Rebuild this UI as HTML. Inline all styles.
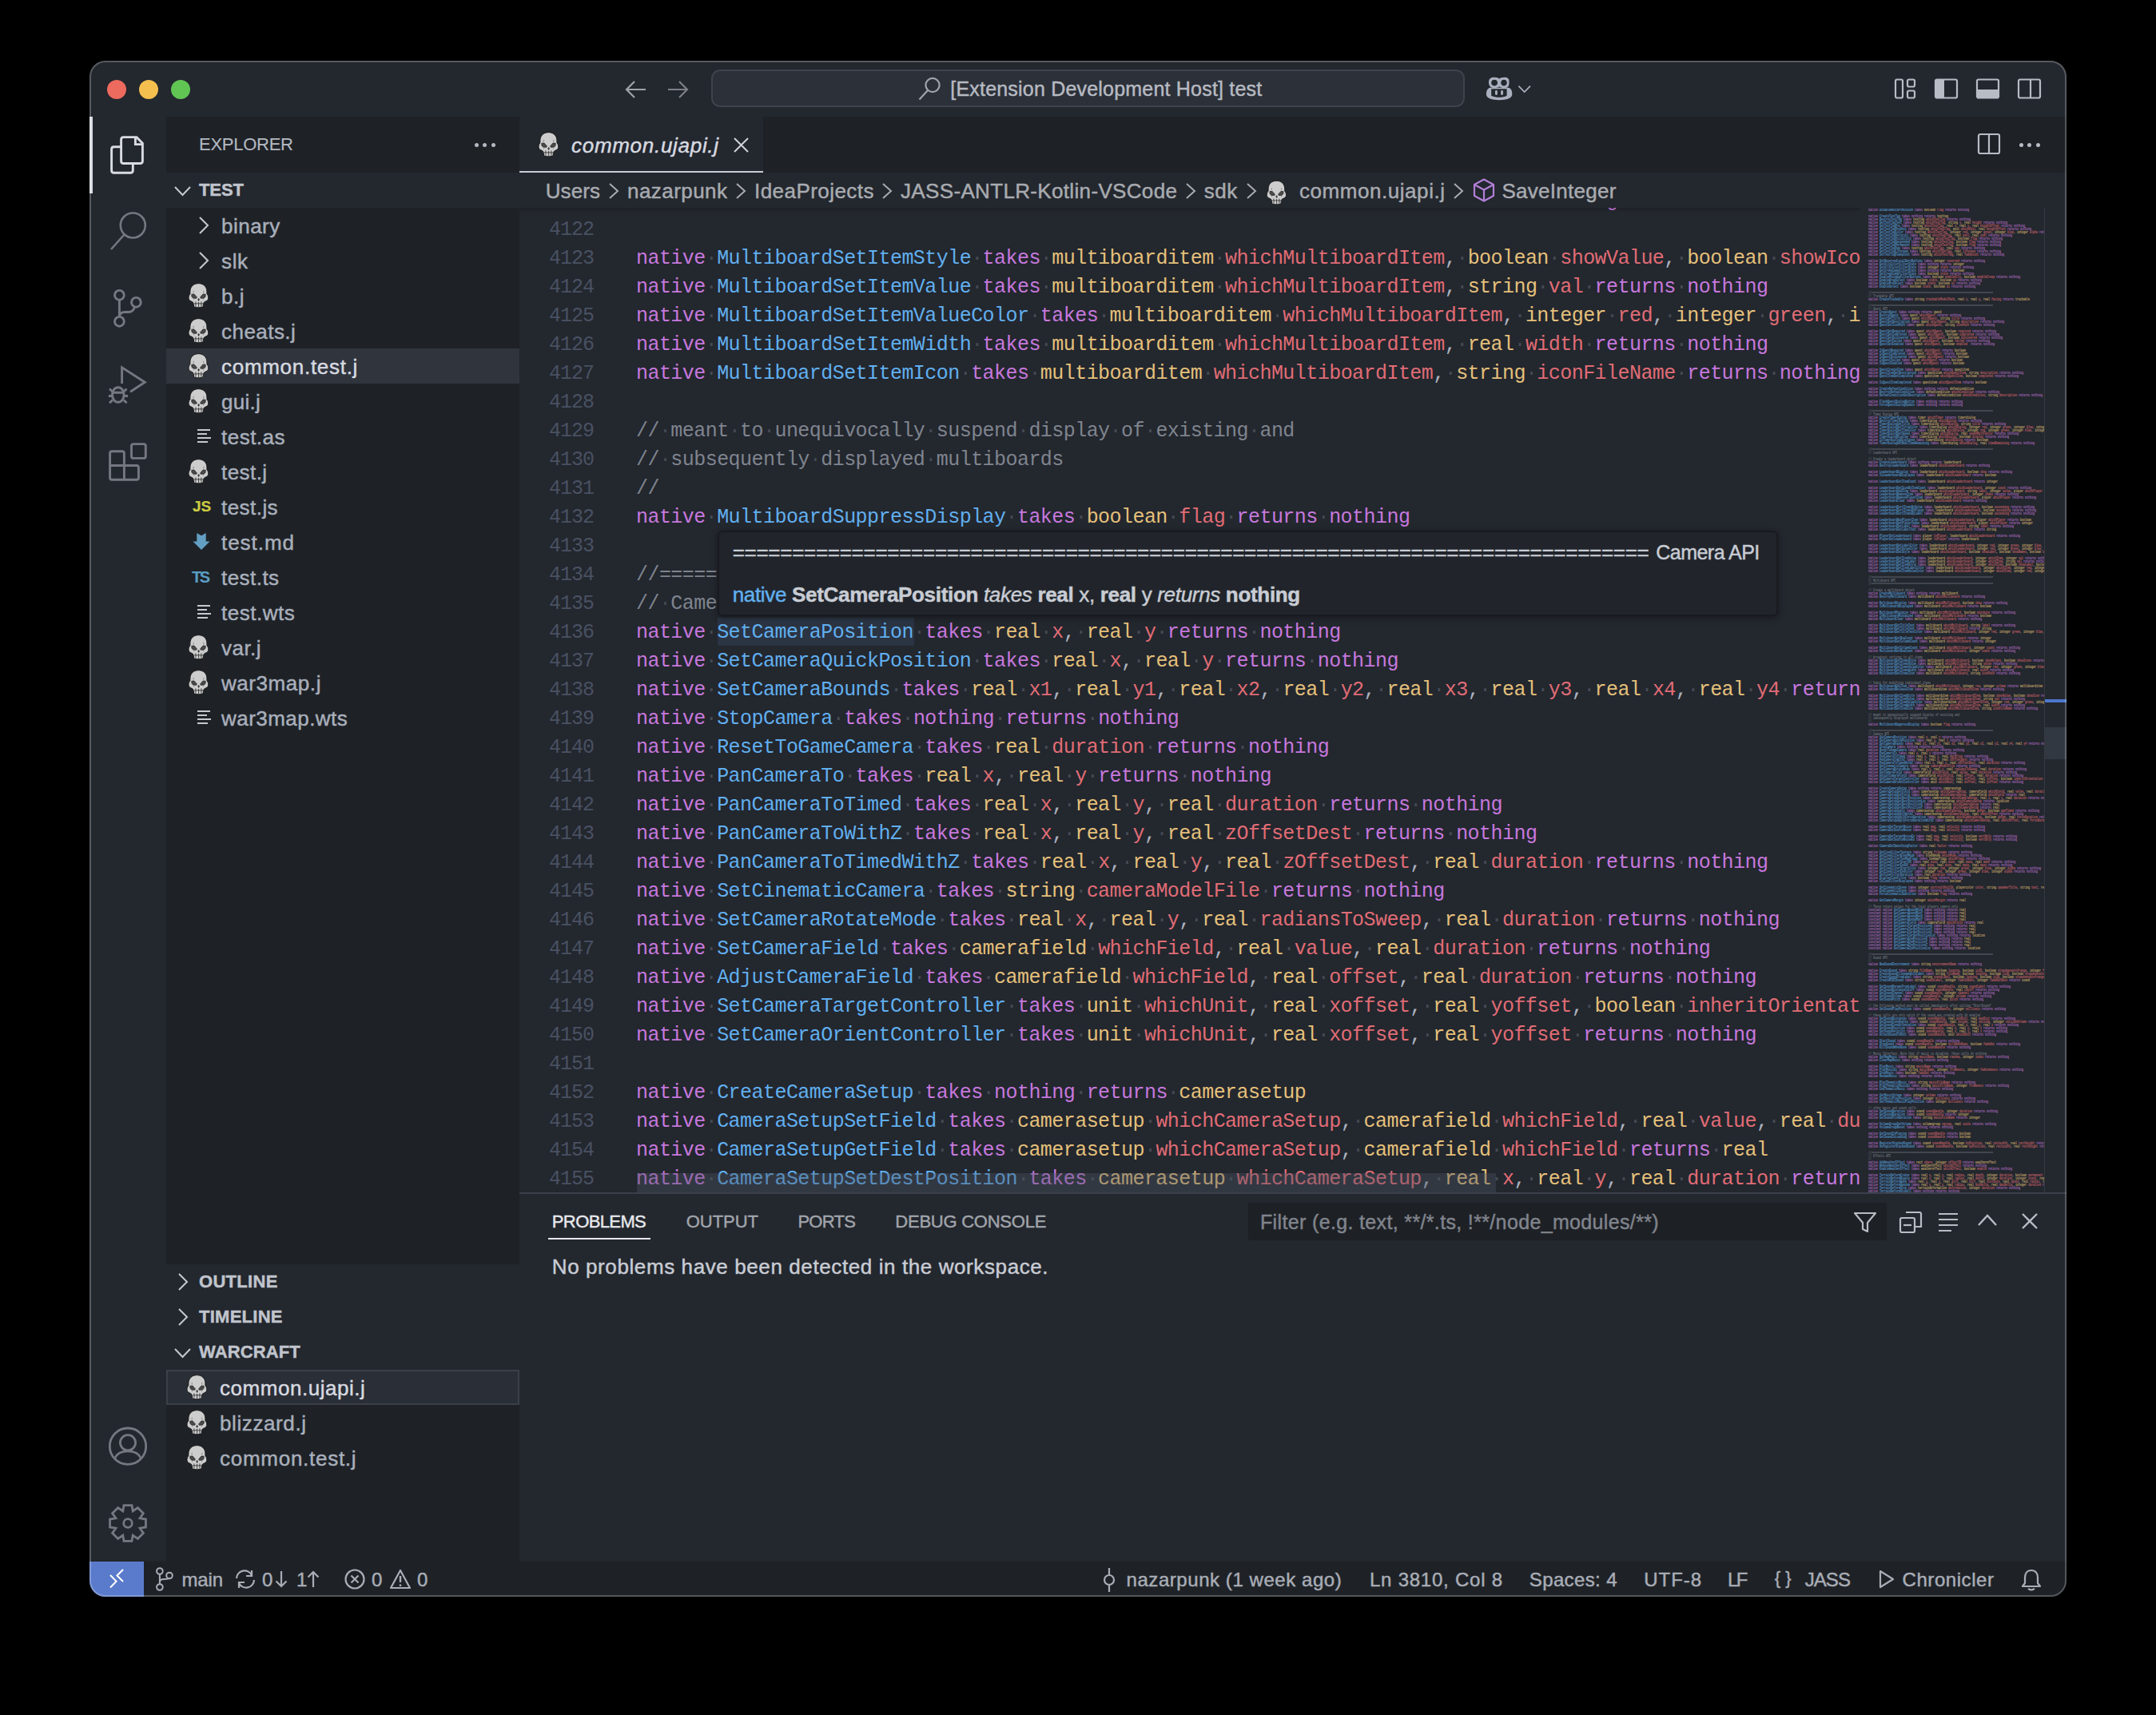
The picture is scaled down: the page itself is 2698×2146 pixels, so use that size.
<!DOCTYPE html><html><head><meta charset="utf-8"><style>
html,body{margin:0;padding:0;background:#000;width:2698px;height:2146px;overflow:hidden}
.t{position:absolute;white-space:pre;font-family:"Liberation Sans",sans-serif;-webkit-text-stroke:0.45px currentColor}
.r{position:absolute}
.s{position:absolute;overflow:visible}
.code{position:absolute;white-space:pre;font-family:"Liberation Mono",monospace;font-size:25px;line-height:36px;height:36px}
#win{position:absolute;left:0;top:0;width:2698px;height:2146px;clip-path:inset(76px 112px 148px 112px round 20px);background:#23272e}
#wb{position:absolute;left:112px;top:76px;width:2474px;height:1922px;border-radius:20px;box-sizing:border-box;border:2px solid rgba(255,255,255,0.24)}

</style></head><body>
<svg width="0" height="0" style="position:absolute"><defs><symbol id="skull" viewBox="0 0 40 44">
<path d="M20,6.6 C26.8,6.6 30.8,11.2 30.8,17 L30.9,20.2 C32.6,21.6 33.4,25.6 32.2,27.6 C31,29.6 28.6,29.6 27.2,30.8 L26.2,33.2 L26,36.2 C24.4,38.2 15.6,38.2 14,36.2 L13.8,33.2 L12.8,30.8 C11.4,29.6 9,29.6 7.8,27.6 C6.6,25.6 7.4,21.6 9.1,20.2 L9.2,17 C9.2,11.2 13.2,6.6 20,6.6 Z" fill="#cdcdcd" stroke="#1a1a1a" stroke-width="1"/>
<path d="M11.2,20.6 L14.4,20.4 L17.9,24.4 L17.2,25.8 L13,25.6 L11.2,23.4 Z" fill="#4a4a4a" stroke="#222" stroke-width="0.8"/>
<path d="M29,20.6 L25.8,20.4 L22.3,24.4 L23,25.8 L27.2,25.6 L29,23.4 Z" fill="#4a4a4a" stroke="#222" stroke-width="0.8"/>
<path d="M20.2,25.6 L21.6,27.4 L20.2,29.6 L18.8,27.4 Z" fill="#333"/>
<path d="M13.6,16 V19 M26.6,16 V19 M14,26.4 V28 M26.4,26.4 V28" stroke="#8a8a8a" stroke-width="1"/>
<path d="M16.4,30 V36.5 M20.2,30.5 V37 M23.6,30 V36.5 M14.5,32.6 H25.8" stroke="#333" stroke-width="0.9"/>
</symbol></defs></svg>
<div id="win">
<div class="r" style="left:134px;top:100px;width:24px;height:24px;border-radius:50%;background:#ed6a5e"></div>
<div class="r" style="left:174px;top:100px;width:24px;height:24px;border-radius:50%;background:#f4bf4f"></div>
<div class="r" style="left:214px;top:100px;width:24px;height:24px;border-radius:50%;background:#61c554"></div>
<svg class="s" style="left:782px;top:100px;" width="28" height="24" viewBox="0 0 28 24"><path d="M2,12 H26 M12,2 L2,12 L12,22" fill="none" stroke="#a0a3aa" stroke-width="2.2"/></svg>
<svg class="s" style="left:834px;top:100px;" width="28" height="24" viewBox="0 0 28 24"><path d="M26,12 H2 M16,2 L26,12 L16,22" fill="none" stroke="#7d8086" stroke-width="2.2"/></svg>
<div class="r" style="left:890px;top:87px;width:943px;height:47px;box-sizing:border-box;border-radius:11px;background:#2c3038;border:2px solid #3f434b"></div>
<svg class="s" style="left:1148px;top:95px;" width="30" height="32" viewBox="0 0 30 32"><circle cx="19" cy="11.5" r="8.6" fill="none" stroke="#a0a4ab" stroke-width="2.2"/><path d="M13,18 L2.5,29.5" stroke="#a0a4ab" stroke-width="2.2"/></svg>
<div class="t" style="left:1189.3px;top:98.8px;font-size:25px;line-height:25px;color:#b6bac2;letter-spacing:0.20px;">[Extension Development Host] test</div>
<svg class="s" style="left:1850px;top:90px;" width="75" height="40" viewBox="0 0 75 40"><path d="M9.9,28 C9.9,23 12,20.5 14.5,19.8 L38,19.8 C40.5,20.5 42.3,23 42.3,28 C42.3,33 35,35.2 26.1,35.2 C17.2,35.2 9.9,33 9.9,28 Z" fill="#a9afbd"/>
<path d="M16.2,21.2 L35.6,21.2 L35.6,29.8 C33,31.3 29.5,31.8 26,31.8 C22.5,31.8 19,31.3 16.2,29.8 Z" fill="#23272e"/>
<path d="M13,13 C13,8.5 15.5,6.8 20,6.8 C23.5,6.8 25.5,7.8 26.3,8.6 C27.1,7.8 29.1,6.8 32.6,6.8 C37.1,6.8 38.6,8.5 38.6,13 C38.6,18 36.5,20.2 32.6,20.2 C29.5,20.2 27.3,19.4 26.3,18.3 C25.3,19.4 23.1,20.2 20,20.2 C16.1,20.2 13,18 13,13 Z" fill="#a9afbd"/>
<ellipse cx="20.1" cy="13.6" rx="3.9" ry="3.8" fill="#23272e"/><ellipse cx="32" cy="13.6" rx="3.7" ry="3.8" fill="#23272e"/>
<rect x="21" y="23" width="2.9" height="6" rx="1.45" fill="#a9afbd"/><rect x="28.1" y="23" width="2.9" height="6" rx="1.45" fill="#a9afbd"/>
<path d="M50.4,17.7 L57.7,25 L65,17.7" fill="none" stroke="#a9afbd" stroke-width="1.7"/></svg>
<svg class="s" style="left:2370px;top:98px;" width="30" height="26" viewBox="0 0 30 26"><rect x="2" y="1.5" width="9" height="23" rx="2" fill="none" stroke="#b8bcc4" stroke-width="2.2"/><rect x="17" y="1.5" width="9" height="9" rx="2" fill="none" stroke="#b8bcc4" stroke-width="2.2"/><rect x="17" y="15.5" width="9" height="9" rx="2" fill="none" stroke="#b8bcc4" stroke-width="2.2"/></svg>
<svg class="s" style="left:2420px;top:98px;" width="32" height="26" viewBox="0 0 32 26"><rect x="2" y="1.5" width="27" height="23" rx="2" fill="none" stroke="#b8bcc4" stroke-width="2.2"/><rect x="2" y="1.5" width="11" height="23" rx="1" fill="#b8bcc4"/></svg>
<svg class="s" style="left:2472px;top:98px;" width="32" height="26" viewBox="0 0 32 26"><rect x="2" y="1.5" width="27" height="23" rx="2" fill="none" stroke="#b8bcc4" stroke-width="2.2"/><rect x="2" y="14" width="27" height="10.5" rx="1" fill="#b8bcc4"/></svg>
<svg class="s" style="left:2524px;top:98px;" width="32" height="26" viewBox="0 0 32 26"><rect x="2" y="1.5" width="27" height="23" rx="2" fill="none" stroke="#b8bcc4" stroke-width="2.2"/><path d="M17,1.5 V24.5" stroke="#b8bcc4" stroke-width="2.2"/></svg>
<div class="r" style="left:112px;top:146px;width:4px;height:96px;background:#d7dae0;"></div>
<svg class="s" style="left:130px;top:160px;" width="60" height="70" viewBox="0 0 60 70"><path d="M24.6,11.6 H40.8 L48.4,19.2 V41.5 Q48.4,44.5 45.4,44.5 H24.6 Q21.6,44.5 21.6,41.5 V14.6 Q21.6,11.6 24.6,11.6 Z" fill="none" stroke="#d9dce2" stroke-width="2.9" stroke-linejoin="round"/>
<path d="M39.4,11.6 V20.6 H48.4" fill="none" stroke="#d9dce2" stroke-width="2.9"/>
<path d="M21.6,23.7 H12.6 Q9.6,23.7 9.6,26.7 V53.3 Q9.6,56.3 12.6,56.3 H33.3 Q36.3,56.3 36.3,53.3 V44.5" fill="none" stroke="#d9dce2" stroke-width="2.9"/></svg>
<svg class="s" style="left:136px;top:262px;" width="48" height="54" viewBox="0 0 48 54"><circle cx="30.3" cy="20" r="15.5" fill="none" stroke="#757880" stroke-width="2.6"/><path d="M19.5,31.5 L3,50" stroke="#757880" stroke-width="2.6"/></svg>
<svg class="s" style="left:130px;top:355px;" width="60" height="60" viewBox="0 0 60 60"><circle cx="19.4" cy="14.3" r="5.9" fill="none" stroke="#757880" stroke-width="2.9"/>
<circle cx="19.4" cy="47.3" r="5.9" fill="none" stroke="#757880" stroke-width="2.9"/>
<circle cx="40.4" cy="23.3" r="5.9" fill="none" stroke="#757880" stroke-width="2.9"/>
<path d="M19.4,20.2 V41.4 M38.6,28.9 C37.3,33.3 34.8,35.5 30.8,35.5 H26.5 C22.3,35.5 19.6,37.6 19.4,41.2" fill="none" stroke="#757880" stroke-width="2.9"/></svg>
<svg class="s" style="left:130px;top:450px;" width="60" height="60" viewBox="0 0 60 60"><path d="M22.6,30.1 V9.8 L51.3,28.3 L33.1,40.2" fill="none" stroke="#757880" stroke-width="2.9" stroke-linejoin="miter"/>
<ellipse cx="17.8" cy="44" rx="7.3" ry="9.3" fill="none" stroke="#757880" stroke-width="2.9"/>
<path d="M10.5,41.3 H25.1 M5.9,45.5 H10.3 M25.3,45.5 H30.1 M7,36.6 L10.8,39.8 M28.6,36.6 L24.8,39.8 M7,54.2 L10.8,50.6 M28.6,54.2 L24.8,50.6" fill="none" stroke="#757880" stroke-width="2.9"/></svg>
<svg class="s" style="left:130px;top:545px;" width="60" height="65" viewBox="0 0 60 65"><path d="M25.4,37.5 V22.2 Q25.4,19.7 22.9,19.7 H10.1 Q7.6,19.7 7.6,22.2 V52.8 Q7.6,55.3 10.1,55.3 H40.9 Q43.4,55.3 43.4,52.8 V40 Q43.4,37.5 40.9,37.5 H7.6 M25.4,37.5 V55.3" fill="none" stroke="#757880" stroke-width="2.9"/>
<rect x="34.5" y="10.6" width="17.8" height="17.8" rx="2.5" fill="none" stroke="#757880" stroke-width="2.9"/></svg>
<svg class="s" style="left:134px;top:1784px;" width="52" height="52" viewBox="0 0 52 52"><circle cx="26" cy="25.7" r="22.7" fill="none" stroke="#757880" stroke-width="2.8"/><circle cx="26" cy="21.2" r="9.6" fill="none" stroke="#757880" stroke-width="2.8"/><path d="M9.5,41 C12,35 18,31.8 26,31.8 C34,31.8 40,35 42.5,41" fill="none" stroke="#757880" stroke-width="2.8"/></svg>
<svg class="s" style="left:134px;top:1880px;" width="52" height="52" viewBox="0 0 52 52"><polygon points="19.76,10.94 21.02,3.55 30.98,3.55 32.24,10.94 38.36,6.60 45.40,13.64 41.06,19.76 48.45,21.02 48.45,30.98 41.06,32.24 45.40,38.36 38.36,45.40 32.24,41.06 30.98,48.45 21.02,48.45 19.76,41.06 13.64,45.40 6.60,38.36 10.94,32.24 3.55,30.98 3.55,21.02 10.94,19.76 6.60,13.64 13.64,6.60" fill="none" stroke="#757880" stroke-width="2.8" stroke-linejoin="miter"/><circle cx="26" cy="26" r="5.3" fill="none" stroke="#757880" stroke-width="2.8"/></svg>
<div class="r" style="left:208px;top:146px;width:442px;height:1808px;background:#1e2227;"></div>
<div class="t" style="left:249.0px;top:170.4px;font-size:22px;line-height:22px;color:#b4b9c1;letter-spacing:-0.26px;-webkit-text-stroke:0.1px currentColor">EXPLORER</div>
<div class="r" style="left:593.5px;top:178.5px;width:5px;height:5px;border-radius:50%;background:#b4b9c1"></div>
<div class="r" style="left:604.0px;top:178.5px;width:5px;height:5px;border-radius:50%;background:#b4b9c1"></div>
<div class="r" style="left:614.5px;top:178.5px;width:5px;height:5px;border-radius:50%;background:#b4b9c1"></div>
<div class="r" style="left:208px;top:216px;width:442px;height:44px;background:#23272e;"></div>
<svg class="s" style="left:217px;top:232px;" width="23" height="14" viewBox="0 0 23 14"><path d="M2,2 L11.5,12 L21,2" fill="none" stroke="#c5c8ce" stroke-width="2"/></svg>
<div class="t" style="left:249.0px;top:227.0px;font-size:22px;line-height:22px;color:#c0c4cc;font-weight:bold;letter-spacing:-0.07px;">TEST</div>
<svg class="s" style="left:248px;top:270px;" width="14" height="24" viewBox="0 0 14 24"><path d="M2,2 L12,12.0 L2,22" fill="none" stroke="#c5c8ce" stroke-width="2"/></svg>
<div class="t" style="left:277.0px;top:270.0px;font-size:26px;line-height:26px;color:#a9afbb;letter-spacing:0.48px;">binary</div>
<svg class="s" style="left:248px;top:314px;" width="14" height="24" viewBox="0 0 14 24"><path d="M2,2 L12,12.0 L2,22" fill="none" stroke="#c5c8ce" stroke-width="2"/></svg>
<div class="t" style="left:277.0px;top:314.0px;font-size:26px;line-height:26px;color:#a9afbb;letter-spacing:0.64px;">slk</div>
<svg class="s" style="left:228.6px;top:347.9px" width="38.8" height="43.2" viewBox="0 0 40 44"><use href="#skull"/></svg>
<div class="t" style="left:277.0px;top:358.0px;font-size:26px;line-height:26px;color:#a9afbb;letter-spacing:0.55px;">b.j</div>
<svg class="s" style="left:228.6px;top:391.9px" width="38.8" height="43.2" viewBox="0 0 40 44"><use href="#skull"/></svg>
<div class="t" style="left:277.0px;top:402.0px;font-size:26px;line-height:26px;color:#a9afbb;letter-spacing:0.46px;">cheats.j</div>
<div class="r" style="left:208px;top:436px;width:442px;height:44px;background:#30343d;"></div>
<svg class="s" style="left:228.6px;top:435.9px" width="38.8" height="43.2" viewBox="0 0 40 44"><use href="#skull"/></svg>
<div class="t" style="left:277.0px;top:446.0px;font-size:26px;line-height:26px;color:#d7dae0;letter-spacing:0.71px;">common.test.j</div>
<svg class="s" style="left:228.6px;top:479.9px" width="38.8" height="43.2" viewBox="0 0 40 44"><use href="#skull"/></svg>
<div class="t" style="left:277.0px;top:490.0px;font-size:26px;line-height:26px;color:#a9afbb;letter-spacing:0.25px;">gui.j</div>
<svg class="s" style="left:247px;top:536px;" width="18" height="20" viewBox="0 0 18 20"><path d="M0,2 H16 M0,7 H12 M0,12 H17 M0,17 H13" stroke="#c5c8ce" stroke-width="2.2" fill="none"/></svg>
<div class="t" style="left:277.0px;top:534.0px;font-size:26px;line-height:26px;color:#a9afbb;letter-spacing:0.49px;">test.as</div>
<svg class="s" style="left:228.6px;top:567.9px" width="38.8" height="43.2" viewBox="0 0 40 44"><use href="#skull"/></svg>
<div class="t" style="left:277.0px;top:578.0px;font-size:26px;line-height:26px;color:#a9afbb;letter-spacing:0.44px;">test.j</div>
<div class="t" style="left:241.0px;top:624.4px;font-size:19px;line-height:19px;color:#cbcb41;font-weight:bold;-webkit-text-stroke:0.2px currentColor">JS</div>
<div class="t" style="left:277.0px;top:622.0px;font-size:26px;line-height:26px;color:#a9afbb;letter-spacing:0.45px;">test.js</div>
<svg class="s" style="left:240px;top:665px;" width="24" height="24" viewBox="0 0 24 24"><path d="M6.3,2 L12,5.2 L17.7,2 V12.4 H22.5 L12,23 L1.5,12.4 H6.3 Z" fill="#629fc2"/></svg>
<div class="t" style="left:277.0px;top:666.0px;font-size:26px;line-height:26px;color:#a9afbb;letter-spacing:0.96px;">test.md</div>
<div class="t" style="left:240.0px;top:711.9px;font-size:20px;line-height:20px;color:#5a9ec4;font-weight:bold;letter-spacing:-2.56px;-webkit-text-stroke:0.1px currentColor">TS</div>
<div class="t" style="left:277.0px;top:710.0px;font-size:26px;line-height:26px;color:#a9afbb;letter-spacing:0.46px;">test.ts</div>
<svg class="s" style="left:247px;top:756px;" width="18" height="20" viewBox="0 0 18 20"><path d="M0,2 H16 M0,7 H12 M0,12 H17 M0,17 H13" stroke="#c5c8ce" stroke-width="2.2" fill="none"/></svg>
<div class="t" style="left:277.0px;top:754.0px;font-size:26px;line-height:26px;color:#a9afbb;letter-spacing:0.50px;">test.wts</div>
<svg class="s" style="left:228.6px;top:787.9px" width="38.8" height="43.2" viewBox="0 0 40 44"><use href="#skull"/></svg>
<div class="t" style="left:277.0px;top:798.0px;font-size:26px;line-height:26px;color:#a9afbb;letter-spacing:0.48px;">var.j</div>
<svg class="s" style="left:228.6px;top:831.9px" width="38.8" height="43.2" viewBox="0 0 40 44"><use href="#skull"/></svg>
<div class="t" style="left:277.0px;top:842.0px;font-size:26px;line-height:26px;color:#a9afbb;letter-spacing:0.56px;">war3map.j</div>
<svg class="s" style="left:247px;top:888px;" width="18" height="20" viewBox="0 0 18 20"><path d="M0,2 H16 M0,7 H12 M0,12 H17 M0,17 H13" stroke="#c5c8ce" stroke-width="2.2" fill="none"/></svg>
<div class="t" style="left:277.0px;top:886.0px;font-size:26px;line-height:26px;color:#a9afbb;letter-spacing:0.46px;">war3map.wts</div>
<div class="r" style="left:208px;top:1582px;width:442px;height:44px;background:#23272e;"></div>
<svg class="s" style="left:222px;top:1592px;" width="14" height="24" viewBox="0 0 14 24"><path d="M2,2 L12,12.0 L2,22" fill="none" stroke="#c5c8ce" stroke-width="2"/></svg>
<div class="t" style="left:249.0px;top:1593.4px;font-size:22px;line-height:22px;color:#c0c4cc;font-weight:bold;letter-spacing:0.31px;">OUTLINE</div>
<div class="r" style="left:208px;top:1626px;width:442px;height:44px;background:#23272e;"></div>
<svg class="s" style="left:222px;top:1636px;" width="14" height="24" viewBox="0 0 14 24"><path d="M2,2 L12,12.0 L2,22" fill="none" stroke="#c5c8ce" stroke-width="2"/></svg>
<div class="t" style="left:249.0px;top:1637.4px;font-size:22px;line-height:22px;color:#c0c4cc;font-weight:bold;letter-spacing:0.26px;">TIMELINE</div>
<div class="r" style="left:208px;top:1670px;width:442px;height:44px;background:#23272e;"></div>
<svg class="s" style="left:217px;top:1686px;" width="23" height="14" viewBox="0 0 23 14"><path d="M2,2 L11.5,12 L21,2" fill="none" stroke="#c5c8ce" stroke-width="2"/></svg>
<div class="t" style="left:249.0px;top:1681.4px;font-size:22px;line-height:22px;color:#c0c4cc;font-weight:bold;letter-spacing:0.13px;">WARCRAFT</div>
<div class="r" style="left:208px;top:1714px;width:442px;height:44px;background:#2a2e36;box-sizing:border-box;border:2px solid #3a3f49"></div>
<svg class="s" style="left:226.6px;top:1713.9px" width="38.8" height="43.2" viewBox="0 0 40 44"><use href="#skull"/></svg>
<div class="t" style="left:275.0px;top:1724.0px;font-size:26px;line-height:26px;color:#d7dae0;letter-spacing:0.54px;">common.ujapi.j</div>
<svg class="s" style="left:226.6px;top:1757.9px" width="38.8" height="43.2" viewBox="0 0 40 44"><use href="#skull"/></svg>
<div class="t" style="left:275.0px;top:1768.0px;font-size:26px;line-height:26px;color:#a9afbb;letter-spacing:0.60px;">blizzard.j</div>
<svg class="s" style="left:226.6px;top:1801.9px" width="38.8" height="43.2" viewBox="0 0 40 44"><use href="#skull"/></svg>
<div class="t" style="left:275.0px;top:1812.0px;font-size:26px;line-height:26px;color:#a9afbb;letter-spacing:0.73px;">common.test.j</div>
<div class="r" style="left:650px;top:146px;width:1936px;height:70px;background:#1e2227;"></div>
<div class="r" style="left:650px;top:146px;width:305px;height:70px;background:#23272e;"></div>
<div class="r" style="left:650px;top:214px;width:305px;height:2px;background:#c8ccd4;"></div>
<svg class="s" style="left:666.6px;top:158.5px" width="38.8" height="43.2" viewBox="0 0 40 44"><use href="#skull"/></svg>
<div class="t" style="left:715.0px;top:169.0px;font-size:26px;line-height:26px;color:#d7dae0;font-style:italic;letter-spacing:0.71px;">common.ujapi.j</div>
<svg class="s" style="left:917px;top:171px;" width="21" height="21" viewBox="0 0 21 21"><path d="M2,2 L19,19 M19,2 L2,19" stroke="#d0d3d9" stroke-width="2"/></svg>
<svg class="s" style="left:2474px;top:166px;" width="30" height="28" viewBox="0 0 30 28"><rect x="2" y="2" width="26" height="24" rx="2" fill="none" stroke="#b8bcc4" stroke-width="2.2"/><path d="M15,2 V26" stroke="#b8bcc4" stroke-width="2.2"/></svg>
<div class="r" style="left:2526.5px;top:178.5px;width:5px;height:5px;border-radius:50%;background:#b8bcc4"></div>
<div class="r" style="left:2537.0px;top:178.5px;width:5px;height:5px;border-radius:50%;background:#b8bcc4"></div>
<div class="r" style="left:2547.5px;top:178.5px;width:5px;height:5px;border-radius:50%;background:#b8bcc4"></div>
<div class="t" style="left:682.7px;top:226.0px;font-size:26px;line-height:26px;color:#a8abb0;letter-spacing:0.10px;">Users</div>
<div class="t" style="left:785.0px;top:226.0px;font-size:26px;line-height:26px;color:#a8abb0;letter-spacing:0.45px;">nazarpunk</div>
<div class="t" style="left:944.0px;top:226.0px;font-size:26px;line-height:26px;color:#a8abb0;letter-spacing:0.45px;">IdeaProjects</div>
<div class="t" style="left:1127.0px;top:226.0px;font-size:26px;line-height:26px;color:#a8abb0;letter-spacing:0.34px;">JASS-ANTLR-Kotlin-VSCode</div>
<div class="t" style="left:1506.8px;top:226.0px;font-size:26px;line-height:26px;color:#a8abb0;letter-spacing:0.52px;">sdk</div>
<div class="t" style="left:1626.0px;top:226.0px;font-size:26px;line-height:26px;color:#a8abb0;letter-spacing:0.55px;">common.ujapi.j</div>
<div class="t" style="left:1879.5px;top:226.0px;font-size:26px;line-height:26px;color:#a8abb0;letter-spacing:0.26px;">SaveInteger</div>
<svg class="s" style="left:761px;top:228px;" width="15" height="22" viewBox="0 0 15 22"><path d="M2,2 L12,11 L2,20" fill="none" stroke="#a8abb0" stroke-width="2"/></svg>
<svg class="s" style="left:920px;top:228px;" width="15" height="22" viewBox="0 0 15 22"><path d="M2,2 L12,11 L2,20" fill="none" stroke="#a8abb0" stroke-width="2"/></svg>
<svg class="s" style="left:1102.8px;top:228px;" width="15" height="22" viewBox="0 0 15 22"><path d="M2,2 L12,11 L2,20" fill="none" stroke="#a8abb0" stroke-width="2"/></svg>
<svg class="s" style="left:1483px;top:228px;" width="15" height="22" viewBox="0 0 15 22"><path d="M2,2 L12,11 L2,20" fill="none" stroke="#a8abb0" stroke-width="2"/></svg>
<svg class="s" style="left:1558.6px;top:228px;" width="15" height="22" viewBox="0 0 15 22"><path d="M2,2 L12,11 L2,20" fill="none" stroke="#a8abb0" stroke-width="2"/></svg>
<svg class="s" style="left:1818.4px;top:228px;" width="15" height="22" viewBox="0 0 15 22"><path d="M2,2 L12,11 L2,20" fill="none" stroke="#a8abb0" stroke-width="2"/></svg>
<svg class="s" style="left:1577.6px;top:219.7px" width="38.8" height="41.8" viewBox="0 0 40 44"><use href="#skull"/></svg>
<svg class="s" style="left:1842px;top:222px;" width="30" height="32" viewBox="0 0 30 32"><path d="M15,2.5 L27,9 V23 L15,29.5 L3,23 V9 Z M3,9 L15,15.5 L27,9 M15,15.5 V29.5" fill="none" stroke="#b180d7" stroke-width="2.2" stroke-linejoin="round"/></svg>
<div style="position:absolute;left:650px;top:260px;width:1678px;height:1232px;overflow:hidden">
<div class="code" style="left:146.0px;top:-25.7px;letter-spacing:-0.55px;"><span style="color:#c678dd">native</span><span style="color:#454a53">·</span><span style="color:#61afef">MultiboardReleaseItem</span><span style="color:#454a53">·</span><span style="color:#c678dd">takes</span><span style="color:#454a53">·</span><span style="color:#e5c07b">multiboarditem</span><span style="color:#454a53">·</span><span style="color:#e06c75">whichMultiboardItem</span><span style="color:#454a53">·</span><span style="color:#c678dd">returns</span><span style="color:#454a53">·</span><span style="color:#c678dd">nothing</span></div>
<div class="r" style="left:248.1px;top:512.8px;width:245.6px;height:35px;background:#2b3443"></div>
<div class="code" style="left:146.0px;top:10.3px;letter-spacing:-0.55px;"></div>
<div class="code" style="left:0;width:93px;text-align:right;top:10.3px;color:#495162;letter-spacing:-1.0px">4122</div>
<div class="code" style="left:146.0px;top:46.3px;letter-spacing:-0.55px;"><span style="color:#c678dd">native</span><span style="color:#454a53">·</span><span style="color:#61afef">MultiboardSetItemStyle</span><span style="color:#454a53">·</span><span style="color:#c678dd">takes</span><span style="color:#454a53">·</span><span style="color:#e5c07b">multiboarditem</span><span style="color:#454a53">·</span><span style="color:#e06c75">whichMultiboardItem</span><span style="color:#abb2bf">,</span><span style="color:#454a53">·</span><span style="color:#e5c07b">boolean</span><span style="color:#454a53">·</span><span style="color:#e06c75">showValue</span><span style="color:#abb2bf">,</span><span style="color:#454a53">·</span><span style="color:#e5c07b">boolean</span><span style="color:#454a53">·</span><span style="color:#e06c75">showIcon</span><span style="color:#454a53">·</span><span style="color:#c678dd">returns</span><span style="color:#454a53">·</span><span style="color:#c678dd">nothing</span></div>
<div class="code" style="left:0;width:93px;text-align:right;top:46.3px;color:#495162;letter-spacing:-1.0px">4123</div>
<div class="code" style="left:146.0px;top:82.3px;letter-spacing:-0.55px;"><span style="color:#c678dd">native</span><span style="color:#454a53">·</span><span style="color:#61afef">MultiboardSetItemValue</span><span style="color:#454a53">·</span><span style="color:#c678dd">takes</span><span style="color:#454a53">·</span><span style="color:#e5c07b">multiboarditem</span><span style="color:#454a53">·</span><span style="color:#e06c75">whichMultiboardItem</span><span style="color:#abb2bf">,</span><span style="color:#454a53">·</span><span style="color:#e5c07b">string</span><span style="color:#454a53">·</span><span style="color:#e06c75">val</span><span style="color:#454a53">·</span><span style="color:#c678dd">returns</span><span style="color:#454a53">·</span><span style="color:#c678dd">nothing</span></div>
<div class="code" style="left:0;width:93px;text-align:right;top:82.3px;color:#495162;letter-spacing:-1.0px">4124</div>
<div class="code" style="left:146.0px;top:118.3px;letter-spacing:-0.55px;"><span style="color:#c678dd">native</span><span style="color:#454a53">·</span><span style="color:#61afef">MultiboardSetItemValueColor</span><span style="color:#454a53">·</span><span style="color:#c678dd">takes</span><span style="color:#454a53">·</span><span style="color:#e5c07b">multiboarditem</span><span style="color:#454a53">·</span><span style="color:#e06c75">whichMultiboardItem</span><span style="color:#abb2bf">,</span><span style="color:#454a53">·</span><span style="color:#e5c07b">integer</span><span style="color:#454a53">·</span><span style="color:#e06c75">red</span><span style="color:#abb2bf">,</span><span style="color:#454a53">·</span><span style="color:#e5c07b">integer</span><span style="color:#454a53">·</span><span style="color:#e06c75">green</span><span style="color:#abb2bf">,</span><span style="color:#454a53">·</span><span style="color:#e5c07b">integer</span><span style="color:#454a53">·</span><span style="color:#e06c75">blue</span><span style="color:#abb2bf">,</span><span style="color:#454a53">·</span><span style="color:#e5c07b">integer</span><span style="color:#454a53">·</span><span style="color:#e06c75">alpha</span><span style="color:#454a53">·</span><span style="color:#c678dd">returns</span><span style="color:#454a53">·</span><span style="color:#c678dd">nothing</span></div>
<div class="code" style="left:0;width:93px;text-align:right;top:118.3px;color:#495162;letter-spacing:-1.0px">4125</div>
<div class="code" style="left:146.0px;top:154.3px;letter-spacing:-0.55px;"><span style="color:#c678dd">native</span><span style="color:#454a53">·</span><span style="color:#61afef">MultiboardSetItemWidth</span><span style="color:#454a53">·</span><span style="color:#c678dd">takes</span><span style="color:#454a53">·</span><span style="color:#e5c07b">multiboarditem</span><span style="color:#454a53">·</span><span style="color:#e06c75">whichMultiboardItem</span><span style="color:#abb2bf">,</span><span style="color:#454a53">·</span><span style="color:#e5c07b">real</span><span style="color:#454a53">·</span><span style="color:#e06c75">width</span><span style="color:#454a53">·</span><span style="color:#c678dd">returns</span><span style="color:#454a53">·</span><span style="color:#c678dd">nothing</span></div>
<div class="code" style="left:0;width:93px;text-align:right;top:154.3px;color:#495162;letter-spacing:-1.0px">4126</div>
<div class="code" style="left:146.0px;top:190.3px;letter-spacing:-0.55px;"><span style="color:#c678dd">native</span><span style="color:#454a53">·</span><span style="color:#61afef">MultiboardSetItemIcon</span><span style="color:#454a53">·</span><span style="color:#c678dd">takes</span><span style="color:#454a53">·</span><span style="color:#e5c07b">multiboarditem</span><span style="color:#454a53">·</span><span style="color:#e06c75">whichMultiboardItem</span><span style="color:#abb2bf">,</span><span style="color:#454a53">·</span><span style="color:#e5c07b">string</span><span style="color:#454a53">·</span><span style="color:#e06c75">iconFileName</span><span style="color:#454a53">·</span><span style="color:#c678dd">returns</span><span style="color:#454a53">·</span><span style="color:#c678dd">nothing</span></div>
<div class="code" style="left:0;width:93px;text-align:right;top:190.3px;color:#495162;letter-spacing:-1.0px">4127</div>
<div class="code" style="left:146.0px;top:226.3px;letter-spacing:-0.55px;"></div>
<div class="code" style="left:0;width:93px;text-align:right;top:226.3px;color:#495162;letter-spacing:-1.0px">4128</div>
<div class="code" style="left:146.0px;top:262.3px;letter-spacing:-0.55px;"><span style="color:#7f848e">//</span><span style="color:#454a53">·</span><span style="color:#7f848e">meant</span><span style="color:#454a53">·</span><span style="color:#7f848e">to</span><span style="color:#454a53">·</span><span style="color:#7f848e">unequivocally</span><span style="color:#454a53">·</span><span style="color:#7f848e">suspend</span><span style="color:#454a53">·</span><span style="color:#7f848e">display</span><span style="color:#454a53">·</span><span style="color:#7f848e">of</span><span style="color:#454a53">·</span><span style="color:#7f848e">existing</span><span style="color:#454a53">·</span><span style="color:#7f848e">and</span></div>
<div class="code" style="left:0;width:93px;text-align:right;top:262.3px;color:#495162;letter-spacing:-1.0px">4129</div>
<div class="code" style="left:146.0px;top:298.3px;letter-spacing:-0.55px;"><span style="color:#7f848e">//</span><span style="color:#454a53">·</span><span style="color:#7f848e">subsequently</span><span style="color:#454a53">·</span><span style="color:#7f848e">displayed</span><span style="color:#454a53">·</span><span style="color:#7f848e">multiboards</span></div>
<div class="code" style="left:0;width:93px;text-align:right;top:298.3px;color:#495162;letter-spacing:-1.0px">4130</div>
<div class="code" style="left:146.0px;top:334.3px;letter-spacing:-0.55px;"><span style="color:#7f848e">//</span></div>
<div class="code" style="left:0;width:93px;text-align:right;top:334.3px;color:#495162;letter-spacing:-1.0px">4131</div>
<div class="code" style="left:146.0px;top:370.3px;letter-spacing:-0.55px;"><span style="color:#c678dd">native</span><span style="color:#454a53">·</span><span style="color:#61afef">MultiboardSuppressDisplay</span><span style="color:#454a53">·</span><span style="color:#c678dd">takes</span><span style="color:#454a53">·</span><span style="color:#e5c07b">boolean</span><span style="color:#454a53">·</span><span style="color:#e06c75">flag</span><span style="color:#454a53">·</span><span style="color:#c678dd">returns</span><span style="color:#454a53">·</span><span style="color:#c678dd">nothing</span></div>
<div class="code" style="left:0;width:93px;text-align:right;top:370.3px;color:#495162;letter-spacing:-1.0px">4132</div>
<div class="code" style="left:146.0px;top:406.3px;letter-spacing:-0.55px;"></div>
<div class="code" style="left:0;width:93px;text-align:right;top:406.3px;color:#495162;letter-spacing:-1.0px">4133</div>
<div class="code" style="left:146.0px;top:442.3px;letter-spacing:-0.55px;"><span style="color:#7f848e">//============================================================================</span></div>
<div class="code" style="left:0;width:93px;text-align:right;top:442.3px;color:#495162;letter-spacing:-1.0px">4134</div>
<div class="code" style="left:146.0px;top:478.3px;letter-spacing:-0.55px;"><span style="color:#7f848e">//</span><span style="color:#454a53">·</span><span style="color:#7f848e">Camera</span><span style="color:#454a53">·</span><span style="color:#7f848e">API</span></div>
<div class="code" style="left:0;width:93px;text-align:right;top:478.3px;color:#495162;letter-spacing:-1.0px">4135</div>
<div class="code" style="left:146.0px;top:514.3px;letter-spacing:-0.55px;"><span style="color:#c678dd">native</span><span style="color:#454a53">·</span><span style="color:#61afef">SetCameraPosition</span><span style="color:#454a53">·</span><span style="color:#c678dd">takes</span><span style="color:#454a53">·</span><span style="color:#e5c07b">real</span><span style="color:#454a53">·</span><span style="color:#e06c75">x</span><span style="color:#abb2bf">,</span><span style="color:#454a53">·</span><span style="color:#e5c07b">real</span><span style="color:#454a53">·</span><span style="color:#e06c75">y</span><span style="color:#454a53">·</span><span style="color:#c678dd">returns</span><span style="color:#454a53">·</span><span style="color:#c678dd">nothing</span></div>
<div class="code" style="left:0;width:93px;text-align:right;top:514.3px;color:#495162;letter-spacing:-1.0px">4136</div>
<div class="code" style="left:146.0px;top:550.3px;letter-spacing:-0.55px;"><span style="color:#c678dd">native</span><span style="color:#454a53">·</span><span style="color:#61afef">SetCameraQuickPosition</span><span style="color:#454a53">·</span><span style="color:#c678dd">takes</span><span style="color:#454a53">·</span><span style="color:#e5c07b">real</span><span style="color:#454a53">·</span><span style="color:#e06c75">x</span><span style="color:#abb2bf">,</span><span style="color:#454a53">·</span><span style="color:#e5c07b">real</span><span style="color:#454a53">·</span><span style="color:#e06c75">y</span><span style="color:#454a53">·</span><span style="color:#c678dd">returns</span><span style="color:#454a53">·</span><span style="color:#c678dd">nothing</span></div>
<div class="code" style="left:0;width:93px;text-align:right;top:550.3px;color:#495162;letter-spacing:-1.0px">4137</div>
<div class="code" style="left:146.0px;top:586.3px;letter-spacing:-0.55px;"><span style="color:#c678dd">native</span><span style="color:#454a53">·</span><span style="color:#61afef">SetCameraBounds</span><span style="color:#454a53">·</span><span style="color:#c678dd">takes</span><span style="color:#454a53">·</span><span style="color:#e5c07b">real</span><span style="color:#454a53">·</span><span style="color:#e06c75">x1</span><span style="color:#abb2bf">,</span><span style="color:#454a53">·</span><span style="color:#e5c07b">real</span><span style="color:#454a53">·</span><span style="color:#e06c75">y1</span><span style="color:#abb2bf">,</span><span style="color:#454a53">·</span><span style="color:#e5c07b">real</span><span style="color:#454a53">·</span><span style="color:#e06c75">x2</span><span style="color:#abb2bf">,</span><span style="color:#454a53">·</span><span style="color:#e5c07b">real</span><span style="color:#454a53">·</span><span style="color:#e06c75">y2</span><span style="color:#abb2bf">,</span><span style="color:#454a53">·</span><span style="color:#e5c07b">real</span><span style="color:#454a53">·</span><span style="color:#e06c75">x3</span><span style="color:#abb2bf">,</span><span style="color:#454a53">·</span><span style="color:#e5c07b">real</span><span style="color:#454a53">·</span><span style="color:#e06c75">y3</span><span style="color:#abb2bf">,</span><span style="color:#454a53">·</span><span style="color:#e5c07b">real</span><span style="color:#454a53">·</span><span style="color:#e06c75">x4</span><span style="color:#abb2bf">,</span><span style="color:#454a53">·</span><span style="color:#e5c07b">real</span><span style="color:#454a53">·</span><span style="color:#e06c75">y4</span><span style="color:#454a53">·</span><span style="color:#c678dd">returns</span><span style="color:#454a53">·</span><span style="color:#c678dd">nothing</span></div>
<div class="code" style="left:0;width:93px;text-align:right;top:586.3px;color:#495162;letter-spacing:-1.0px">4138</div>
<div class="code" style="left:146.0px;top:622.3px;letter-spacing:-0.55px;"><span style="color:#c678dd">native</span><span style="color:#454a53">·</span><span style="color:#61afef">StopCamera</span><span style="color:#454a53">·</span><span style="color:#c678dd">takes</span><span style="color:#454a53">·</span><span style="color:#c678dd">nothing</span><span style="color:#454a53">·</span><span style="color:#c678dd">returns</span><span style="color:#454a53">·</span><span style="color:#c678dd">nothing</span></div>
<div class="code" style="left:0;width:93px;text-align:right;top:622.3px;color:#495162;letter-spacing:-1.0px">4139</div>
<div class="code" style="left:146.0px;top:658.3px;letter-spacing:-0.55px;"><span style="color:#c678dd">native</span><span style="color:#454a53">·</span><span style="color:#61afef">ResetToGameCamera</span><span style="color:#454a53">·</span><span style="color:#c678dd">takes</span><span style="color:#454a53">·</span><span style="color:#e5c07b">real</span><span style="color:#454a53">·</span><span style="color:#e06c75">duration</span><span style="color:#454a53">·</span><span style="color:#c678dd">returns</span><span style="color:#454a53">·</span><span style="color:#c678dd">nothing</span></div>
<div class="code" style="left:0;width:93px;text-align:right;top:658.3px;color:#495162;letter-spacing:-1.0px">4140</div>
<div class="code" style="left:146.0px;top:694.3px;letter-spacing:-0.55px;"><span style="color:#c678dd">native</span><span style="color:#454a53">·</span><span style="color:#61afef">PanCameraTo</span><span style="color:#454a53">·</span><span style="color:#c678dd">takes</span><span style="color:#454a53">·</span><span style="color:#e5c07b">real</span><span style="color:#454a53">·</span><span style="color:#e06c75">x</span><span style="color:#abb2bf">,</span><span style="color:#454a53">·</span><span style="color:#e5c07b">real</span><span style="color:#454a53">·</span><span style="color:#e06c75">y</span><span style="color:#454a53">·</span><span style="color:#c678dd">returns</span><span style="color:#454a53">·</span><span style="color:#c678dd">nothing</span></div>
<div class="code" style="left:0;width:93px;text-align:right;top:694.3px;color:#495162;letter-spacing:-1.0px">4141</div>
<div class="code" style="left:146.0px;top:730.3px;letter-spacing:-0.55px;"><span style="color:#c678dd">native</span><span style="color:#454a53">·</span><span style="color:#61afef">PanCameraToTimed</span><span style="color:#454a53">·</span><span style="color:#c678dd">takes</span><span style="color:#454a53">·</span><span style="color:#e5c07b">real</span><span style="color:#454a53">·</span><span style="color:#e06c75">x</span><span style="color:#abb2bf">,</span><span style="color:#454a53">·</span><span style="color:#e5c07b">real</span><span style="color:#454a53">·</span><span style="color:#e06c75">y</span><span style="color:#abb2bf">,</span><span style="color:#454a53">·</span><span style="color:#e5c07b">real</span><span style="color:#454a53">·</span><span style="color:#e06c75">duration</span><span style="color:#454a53">·</span><span style="color:#c678dd">returns</span><span style="color:#454a53">·</span><span style="color:#c678dd">nothing</span></div>
<div class="code" style="left:0;width:93px;text-align:right;top:730.3px;color:#495162;letter-spacing:-1.0px">4142</div>
<div class="code" style="left:146.0px;top:766.3px;letter-spacing:-0.55px;"><span style="color:#c678dd">native</span><span style="color:#454a53">·</span><span style="color:#61afef">PanCameraToWithZ</span><span style="color:#454a53">·</span><span style="color:#c678dd">takes</span><span style="color:#454a53">·</span><span style="color:#e5c07b">real</span><span style="color:#454a53">·</span><span style="color:#e06c75">x</span><span style="color:#abb2bf">,</span><span style="color:#454a53">·</span><span style="color:#e5c07b">real</span><span style="color:#454a53">·</span><span style="color:#e06c75">y</span><span style="color:#abb2bf">,</span><span style="color:#454a53">·</span><span style="color:#e5c07b">real</span><span style="color:#454a53">·</span><span style="color:#e06c75">zOffsetDest</span><span style="color:#454a53">·</span><span style="color:#c678dd">returns</span><span style="color:#454a53">·</span><span style="color:#c678dd">nothing</span></div>
<div class="code" style="left:0;width:93px;text-align:right;top:766.3px;color:#495162;letter-spacing:-1.0px">4143</div>
<div class="code" style="left:146.0px;top:802.3px;letter-spacing:-0.55px;"><span style="color:#c678dd">native</span><span style="color:#454a53">·</span><span style="color:#61afef">PanCameraToTimedWithZ</span><span style="color:#454a53">·</span><span style="color:#c678dd">takes</span><span style="color:#454a53">·</span><span style="color:#e5c07b">real</span><span style="color:#454a53">·</span><span style="color:#e06c75">x</span><span style="color:#abb2bf">,</span><span style="color:#454a53">·</span><span style="color:#e5c07b">real</span><span style="color:#454a53">·</span><span style="color:#e06c75">y</span><span style="color:#abb2bf">,</span><span style="color:#454a53">·</span><span style="color:#e5c07b">real</span><span style="color:#454a53">·</span><span style="color:#e06c75">zOffsetDest</span><span style="color:#abb2bf">,</span><span style="color:#454a53">·</span><span style="color:#e5c07b">real</span><span style="color:#454a53">·</span><span style="color:#e06c75">duration</span><span style="color:#454a53">·</span><span style="color:#c678dd">returns</span><span style="color:#454a53">·</span><span style="color:#c678dd">nothing</span></div>
<div class="code" style="left:0;width:93px;text-align:right;top:802.3px;color:#495162;letter-spacing:-1.0px">4144</div>
<div class="code" style="left:146.0px;top:838.3px;letter-spacing:-0.55px;"><span style="color:#c678dd">native</span><span style="color:#454a53">·</span><span style="color:#61afef">SetCinematicCamera</span><span style="color:#454a53">·</span><span style="color:#c678dd">takes</span><span style="color:#454a53">·</span><span style="color:#e5c07b">string</span><span style="color:#454a53">·</span><span style="color:#e06c75">cameraModelFile</span><span style="color:#454a53">·</span><span style="color:#c678dd">returns</span><span style="color:#454a53">·</span><span style="color:#c678dd">nothing</span></div>
<div class="code" style="left:0;width:93px;text-align:right;top:838.3px;color:#495162;letter-spacing:-1.0px">4145</div>
<div class="code" style="left:146.0px;top:874.3px;letter-spacing:-0.55px;"><span style="color:#c678dd">native</span><span style="color:#454a53">·</span><span style="color:#61afef">SetCameraRotateMode</span><span style="color:#454a53">·</span><span style="color:#c678dd">takes</span><span style="color:#454a53">·</span><span style="color:#e5c07b">real</span><span style="color:#454a53">·</span><span style="color:#e06c75">x</span><span style="color:#abb2bf">,</span><span style="color:#454a53">·</span><span style="color:#e5c07b">real</span><span style="color:#454a53">·</span><span style="color:#e06c75">y</span><span style="color:#abb2bf">,</span><span style="color:#454a53">·</span><span style="color:#e5c07b">real</span><span style="color:#454a53">·</span><span style="color:#e06c75">radiansToSweep</span><span style="color:#abb2bf">,</span><span style="color:#454a53">·</span><span style="color:#e5c07b">real</span><span style="color:#454a53">·</span><span style="color:#e06c75">duration</span><span style="color:#454a53">·</span><span style="color:#c678dd">returns</span><span style="color:#454a53">·</span><span style="color:#c678dd">nothing</span></div>
<div class="code" style="left:0;width:93px;text-align:right;top:874.3px;color:#495162;letter-spacing:-1.0px">4146</div>
<div class="code" style="left:146.0px;top:910.3px;letter-spacing:-0.55px;"><span style="color:#c678dd">native</span><span style="color:#454a53">·</span><span style="color:#61afef">SetCameraField</span><span style="color:#454a53">·</span><span style="color:#c678dd">takes</span><span style="color:#454a53">·</span><span style="color:#e5c07b">camerafield</span><span style="color:#454a53">·</span><span style="color:#e06c75">whichField</span><span style="color:#abb2bf">,</span><span style="color:#454a53">·</span><span style="color:#e5c07b">real</span><span style="color:#454a53">·</span><span style="color:#e06c75">value</span><span style="color:#abb2bf">,</span><span style="color:#454a53">·</span><span style="color:#e5c07b">real</span><span style="color:#454a53">·</span><span style="color:#e06c75">duration</span><span style="color:#454a53">·</span><span style="color:#c678dd">returns</span><span style="color:#454a53">·</span><span style="color:#c678dd">nothing</span></div>
<div class="code" style="left:0;width:93px;text-align:right;top:910.3px;color:#495162;letter-spacing:-1.0px">4147</div>
<div class="code" style="left:146.0px;top:946.3px;letter-spacing:-0.55px;"><span style="color:#c678dd">native</span><span style="color:#454a53">·</span><span style="color:#61afef">AdjustCameraField</span><span style="color:#454a53">·</span><span style="color:#c678dd">takes</span><span style="color:#454a53">·</span><span style="color:#e5c07b">camerafield</span><span style="color:#454a53">·</span><span style="color:#e06c75">whichField</span><span style="color:#abb2bf">,</span><span style="color:#454a53">·</span><span style="color:#e5c07b">real</span><span style="color:#454a53">·</span><span style="color:#e06c75">offset</span><span style="color:#abb2bf">,</span><span style="color:#454a53">·</span><span style="color:#e5c07b">real</span><span style="color:#454a53">·</span><span style="color:#e06c75">duration</span><span style="color:#454a53">·</span><span style="color:#c678dd">returns</span><span style="color:#454a53">·</span><span style="color:#c678dd">nothing</span></div>
<div class="code" style="left:0;width:93px;text-align:right;top:946.3px;color:#495162;letter-spacing:-1.0px">4148</div>
<div class="code" style="left:146.0px;top:982.3px;letter-spacing:-0.55px;"><span style="color:#c678dd">native</span><span style="color:#454a53">·</span><span style="color:#61afef">SetCameraTargetController</span><span style="color:#454a53">·</span><span style="color:#c678dd">takes</span><span style="color:#454a53">·</span><span style="color:#e5c07b">unit</span><span style="color:#454a53">·</span><span style="color:#e06c75">whichUnit</span><span style="color:#abb2bf">,</span><span style="color:#454a53">·</span><span style="color:#e5c07b">real</span><span style="color:#454a53">·</span><span style="color:#e06c75">xoffset</span><span style="color:#abb2bf">,</span><span style="color:#454a53">·</span><span style="color:#e5c07b">real</span><span style="color:#454a53">·</span><span style="color:#e06c75">yoffset</span><span style="color:#abb2bf">,</span><span style="color:#454a53">·</span><span style="color:#e5c07b">boolean</span><span style="color:#454a53">·</span><span style="color:#e06c75">inheritOrientation</span><span style="color:#454a53">·</span><span style="color:#c678dd">returns</span><span style="color:#454a53">·</span><span style="color:#c678dd">nothing</span></div>
<div class="code" style="left:0;width:93px;text-align:right;top:982.3px;color:#495162;letter-spacing:-1.0px">4149</div>
<div class="code" style="left:146.0px;top:1018.3px;letter-spacing:-0.55px;"><span style="color:#c678dd">native</span><span style="color:#454a53">·</span><span style="color:#61afef">SetCameraOrientController</span><span style="color:#454a53">·</span><span style="color:#c678dd">takes</span><span style="color:#454a53">·</span><span style="color:#e5c07b">unit</span><span style="color:#454a53">·</span><span style="color:#e06c75">whichUnit</span><span style="color:#abb2bf">,</span><span style="color:#454a53">·</span><span style="color:#e5c07b">real</span><span style="color:#454a53">·</span><span style="color:#e06c75">xoffset</span><span style="color:#abb2bf">,</span><span style="color:#454a53">·</span><span style="color:#e5c07b">real</span><span style="color:#454a53">·</span><span style="color:#e06c75">yoffset</span><span style="color:#454a53">·</span><span style="color:#c678dd">returns</span><span style="color:#454a53">·</span><span style="color:#c678dd">nothing</span></div>
<div class="code" style="left:0;width:93px;text-align:right;top:1018.3px;color:#495162;letter-spacing:-1.0px">4150</div>
<div class="code" style="left:146.0px;top:1054.3px;letter-spacing:-0.55px;"></div>
<div class="code" style="left:0;width:93px;text-align:right;top:1054.3px;color:#495162;letter-spacing:-1.0px">4151</div>
<div class="code" style="left:146.0px;top:1090.3px;letter-spacing:-0.55px;"><span style="color:#c678dd">native</span><span style="color:#454a53">·</span><span style="color:#61afef">CreateCameraSetup</span><span style="color:#454a53">·</span><span style="color:#c678dd">takes</span><span style="color:#454a53">·</span><span style="color:#c678dd">nothing</span><span style="color:#454a53">·</span><span style="color:#c678dd">returns</span><span style="color:#454a53">·</span><span style="color:#e5c07b">camerasetup</span></div>
<div class="code" style="left:0;width:93px;text-align:right;top:1090.3px;color:#495162;letter-spacing:-1.0px">4152</div>
<div class="code" style="left:146.0px;top:1126.3px;letter-spacing:-0.55px;"><span style="color:#c678dd">native</span><span style="color:#454a53">·</span><span style="color:#61afef">CameraSetupSetField</span><span style="color:#454a53">·</span><span style="color:#c678dd">takes</span><span style="color:#454a53">·</span><span style="color:#e5c07b">camerasetup</span><span style="color:#454a53">·</span><span style="color:#e06c75">whichCameraSetup</span><span style="color:#abb2bf">,</span><span style="color:#454a53">·</span><span style="color:#e5c07b">camerafield</span><span style="color:#454a53">·</span><span style="color:#e06c75">whichField</span><span style="color:#abb2bf">,</span><span style="color:#454a53">·</span><span style="color:#e5c07b">real</span><span style="color:#454a53">·</span><span style="color:#e06c75">value</span><span style="color:#abb2bf">,</span><span style="color:#454a53">·</span><span style="color:#e5c07b">real</span><span style="color:#454a53">·</span><span style="color:#e06c75">duration</span><span style="color:#454a53">·</span><span style="color:#c678dd">returns</span><span style="color:#454a53">·</span><span style="color:#c678dd">nothing</span></div>
<div class="code" style="left:0;width:93px;text-align:right;top:1126.3px;color:#495162;letter-spacing:-1.0px">4153</div>
<div class="code" style="left:146.0px;top:1162.3px;letter-spacing:-0.55px;"><span style="color:#c678dd">native</span><span style="color:#454a53">·</span><span style="color:#61afef">CameraSetupGetField</span><span style="color:#454a53">·</span><span style="color:#c678dd">takes</span><span style="color:#454a53">·</span><span style="color:#e5c07b">camerasetup</span><span style="color:#454a53">·</span><span style="color:#e06c75">whichCameraSetup</span><span style="color:#abb2bf">,</span><span style="color:#454a53">·</span><span style="color:#e5c07b">camerafield</span><span style="color:#454a53">·</span><span style="color:#e06c75">whichField</span><span style="color:#454a53">·</span><span style="color:#c678dd">returns</span><span style="color:#454a53">·</span><span style="color:#e5c07b">real</span></div>
<div class="code" style="left:0;width:93px;text-align:right;top:1162.3px;color:#495162;letter-spacing:-1.0px">4154</div>
<div class="code" style="left:146.0px;top:1198.3px;letter-spacing:-0.55px;"><span style="color:#c678dd">native</span><span style="color:#454a53">·</span><span style="color:#61afef">CameraSetupSetDestPosition</span><span style="color:#454a53">·</span><span style="color:#c678dd">takes</span><span style="color:#454a53">·</span><span style="color:#e5c07b">camerasetup</span><span style="color:#454a53">·</span><span style="color:#e06c75">whichCameraSetup</span><span style="color:#abb2bf">,</span><span style="color:#454a53">·</span><span style="color:#e5c07b">real</span><span style="color:#454a53">·</span><span style="color:#e06c75">x</span><span style="color:#abb2bf">,</span><span style="color:#454a53">·</span><span style="color:#e5c07b">real</span><span style="color:#454a53">·</span><span style="color:#e06c75">y</span><span style="color:#abb2bf">,</span><span style="color:#454a53">·</span><span style="color:#e5c07b">real</span><span style="color:#454a53">·</span><span style="color:#e06c75">duration</span><span style="color:#454a53">·</span><span style="color:#c678dd">returns</span><span style="color:#454a53">·</span><span style="color:#c678dd">nothing</span></div>
<div class="code" style="left:0;width:93px;text-align:right;top:1198.3px;color:#495162;letter-spacing:-1.0px">4155</div>
</div>
<div class="r" style="left:650px;top:260px;width:1678px;height:6px;background:linear-gradient(rgba(0,0,0,0.18),rgba(0,0,0,0))"></div>
<div class="r" style="left:797px;top:1468px;width:1075px;height:24px;background:rgba(78,86,102,0.376);"></div>
<div style="position:absolute;left:2338px;top:260.5px;width:220px;height:1231.5px;overflow:hidden"><div style="position:absolute;left:0;top:0;width:300px;transform:scale(0.7407,1);transform-origin:0 0;white-space:pre;font-family:'Liberation Mono',monospace;font-size:4.5px;line-height:4px;font-weight:bold;opacity:0.78"><span style="color:#c678dd">native</span> <span style="color:#61afef">DisableRestartMission</span> <span style="color:#c678dd">takes</span> <span style="color:#e5c07b">boolean</span> <span style="color:#e06c75">flag</span> <span style="color:#c678dd">returns</span> <span style="color:#c678dd">nothing</span>

<span style="color:#c678dd">native</span> <span style="color:#61afef">CreateTextTag</span> <span style="color:#c678dd">takes</span> <span style="color:#c678dd">nothing</span> <span style="color:#c678dd">returns</span> <span style="color:#e5c07b">texttag</span>
<span style="color:#c678dd">native</span> <span style="color:#61afef">DestroyTextTag</span> <span style="color:#c678dd">takes</span> <span style="color:#e5c07b">texttag</span> <span style="color:#e06c75">whichTextTag</span> <span style="color:#c678dd">returns</span> <span style="color:#c678dd">nothing</span>
<span style="color:#c678dd">native</span> <span style="color:#61afef">SetTextTagText</span> <span style="color:#c678dd">takes</span> <span style="color:#e5c07b">texttag</span> <span style="color:#e06c75">whichTextTag</span><span style="color:#abb2bf">,</span> <span style="color:#e5c07b">string</span> <span style="color:#e06c75">s</span><span style="color:#abb2bf">,</span> <span style="color:#e5c07b">real</span> <span style="color:#e06c75">height</span> <span style="color:#c678dd">returns</span> <span style="color:#c678dd">nothing</span>
<span style="color:#c678dd">native</span> <span style="color:#61afef">SetTextTagPos</span> <span style="color:#c678dd">takes</span> <span style="color:#e5c07b">texttag</span> <span style="color:#e06c75">whichTextTag</span><span style="color:#abb2bf">,</span> <span style="color:#e5c07b">real</span> <span style="color:#e06c75">x</span><span style="color:#abb2bf">,</span> <span style="color:#e5c07b">real</span> <span style="color:#e06c75">y</span><span style="color:#abb2bf">,</span> <span style="color:#e5c07b">real</span> <span style="color:#e06c75">heightOffset</span> <span style="color:#c678dd">returns</span> <span style="color:#c678dd">nothing</span>
<span style="color:#c678dd">native</span> <span style="color:#61afef">SetTextTagPosUnit</span> <span style="color:#c678dd">takes</span> <span style="color:#e5c07b">texttag</span> <span style="color:#e06c75">whichTextTag</span><span style="color:#abb2bf">,</span> <span style="color:#e5c07b">unit</span> <span style="color:#e06c75">whichUnit</span><span style="color:#abb2bf">,</span> <span style="color:#e5c07b">real</span> <span style="color:#e06c75">heightOffset</span> <span style="color:#c678dd">returns</span> <span style="color:#c678dd">nothing</span>
<span style="color:#c678dd">native</span> <span style="color:#61afef">SetTextTagColor</span> <span style="color:#c678dd">takes</span> <span style="color:#e5c07b">texttag</span> <span style="color:#e06c75">whichTextTag</span><span style="color:#abb2bf">,</span> <span style="color:#e5c07b">integer</span> <span style="color:#e06c75">red</span><span style="color:#abb2bf">,</span> <span style="color:#e5c07b">integer</span> <span style="color:#e06c75">green</span><span style="color:#abb2bf">,</span> <span style="color:#e5c07b">integer</span> <span style="color:#e06c75">blue</span><span style="color:#abb2bf">,</span> <span style="color:#e5c07b">integer</span> <span style="color:#e06c75">alpha</span> <span style="color:#c678dd">returns</span> <span style="color:#c678dd">nothing</span>
<span style="color:#c678dd">native</span> <span style="color:#61afef">SetTextTagVelocity</span> <span style="color:#c678dd">takes</span> <span style="color:#e5c07b">texttag</span> <span style="color:#e06c75">whichTextTag</span><span style="color:#abb2bf">,</span> <span style="color:#e5c07b">real</span> <span style="color:#e06c75">xvel</span><span style="color:#abb2bf">,</span> <span style="color:#e5c07b">real</span> <span style="color:#e06c75">yvel</span> <span style="color:#c678dd">returns</span> <span style="color:#c678dd">nothing</span>
<span style="color:#c678dd">native</span> <span style="color:#61afef">SetTextTagVisibility</span> <span style="color:#c678dd">takes</span> <span style="color:#e5c07b">texttag</span> <span style="color:#e06c75">whichTextTag</span><span style="color:#abb2bf">,</span> <span style="color:#e5c07b">boolean</span> <span style="color:#e06c75">flag</span> <span style="color:#c678dd">returns</span> <span style="color:#c678dd">nothing</span>
<span style="color:#c678dd">native</span> <span style="color:#61afef">SetTextTagSuspended</span> <span style="color:#c678dd">takes</span> <span style="color:#e5c07b">texttag</span> <span style="color:#e06c75">whichTextTag</span><span style="color:#abb2bf">,</span> <span style="color:#e5c07b">boolean</span> <span style="color:#e06c75">flag</span> <span style="color:#c678dd">returns</span> <span style="color:#c678dd">nothing</span>
<span style="color:#c678dd">native</span> <span style="color:#61afef">SetTextTagPermanent</span> <span style="color:#c678dd">takes</span> <span style="color:#e5c07b">texttag</span> <span style="color:#e06c75">whichTextTag</span><span style="color:#abb2bf">,</span> <span style="color:#e5c07b">boolean</span> <span style="color:#e06c75">flag</span> <span style="color:#c678dd">returns</span> <span style="color:#c678dd">nothing</span>
<span style="color:#c678dd">native</span> <span style="color:#61afef">SetTextTagAge</span> <span style="color:#c678dd">takes</span> <span style="color:#e5c07b">texttag</span> <span style="color:#e06c75">whichTextTag</span><span style="color:#abb2bf">,</span> <span style="color:#e5c07b">real</span> <span style="color:#e06c75">age</span> <span style="color:#c678dd">returns</span> <span style="color:#c678dd">nothing</span>
<span style="color:#c678dd">native</span> <span style="color:#61afef">SetTextTagLifespan</span> <span style="color:#c678dd">takes</span> <span style="color:#e5c07b">texttag</span> <span style="color:#e06c75">whichTextTag</span><span style="color:#abb2bf">,</span> <span style="color:#e5c07b">real</span> <span style="color:#e06c75">lifespan</span> <span style="color:#c678dd">returns</span> <span style="color:#c678dd">nothing</span>
<span style="color:#c678dd">native</span> <span style="color:#61afef">SetTextTagFadepoint</span> <span style="color:#c678dd">takes</span> <span style="color:#e5c07b">texttag</span> <span style="color:#e06c75">whichTextTag</span><span style="color:#abb2bf">,</span> <span style="color:#e5c07b">real</span> <span style="color:#e06c75">fadepoint</span> <span style="color:#c678dd">returns</span> <span style="color:#c678dd">nothing</span>

<span style="color:#c678dd">native</span> <span style="color:#61afef">SetReservedLocalHeroButtons</span> <span style="color:#c678dd">takes</span> <span style="color:#e5c07b">integer</span> <span style="color:#e06c75">reserved</span> <span style="color:#c678dd">returns</span> <span style="color:#c678dd">nothing</span>
<span style="color:#c678dd">native</span> <span style="color:#61afef">GetAllyColorFilterState</span> <span style="color:#c678dd">takes</span> <span style="color:#c678dd">nothing</span> <span style="color:#c678dd">returns</span> <span style="color:#e5c07b">integer</span>
<span style="color:#c678dd">native</span> <span style="color:#61afef">SetAllyColorFilterState</span> <span style="color:#c678dd">takes</span> <span style="color:#e5c07b">integer</span> <span style="color:#e06c75">state</span> <span style="color:#c678dd">returns</span> <span style="color:#c678dd">nothing</span>
<span style="color:#c678dd">native</span> <span style="color:#61afef">GetCreepCampFilterState</span> <span style="color:#c678dd">takes</span> <span style="color:#c678dd">nothing</span> <span style="color:#c678dd">returns</span> <span style="color:#e5c07b">boolean</span>
<span style="color:#c678dd">native</span> <span style="color:#61afef">SetCreepCampFilterState</span> <span style="color:#c678dd">takes</span> <span style="color:#e5c07b">boolean</span> <span style="color:#e06c75">state</span> <span style="color:#c678dd">returns</span> <span style="color:#c678dd">nothing</span>
<span style="color:#c678dd">native</span> <span style="color:#61afef">EnableMinimapFilterButtons</span> <span style="color:#c678dd">takes</span> <span style="color:#e5c07b">boolean</span> <span style="color:#e06c75">enableAlly</span><span style="color:#abb2bf">,</span> <span style="color:#e5c07b">boolean</span> <span style="color:#e06c75">enableCreep</span> <span style="color:#c678dd">returns</span> <span style="color:#c678dd">nothing</span>
<span style="color:#c678dd">native</span> <span style="color:#61afef">EnableDragSelect</span> <span style="color:#c678dd">takes</span> <span style="color:#e5c07b">boolean</span> <span style="color:#e06c75">state</span><span style="color:#abb2bf">,</span> <span style="color:#e5c07b">boolean</span> <span style="color:#e06c75">ui</span> <span style="color:#c678dd">returns</span> <span style="color:#c678dd">nothing</span>
<span style="color:#c678dd">native</span> <span style="color:#61afef">EnablePreSelect</span> <span style="color:#c678dd">takes</span> <span style="color:#e5c07b">boolean</span> <span style="color:#e06c75">state</span><span style="color:#abb2bf">,</span> <span style="color:#e5c07b">boolean</span> <span style="color:#e06c75">ui</span> <span style="color:#c678dd">returns</span> <span style="color:#c678dd">nothing</span>
<span style="color:#c678dd">native</span> <span style="color:#61afef">EnableSelect</span> <span style="color:#c678dd">takes</span> <span style="color:#e5c07b">boolean</span> <span style="color:#e06c75">state</span><span style="color:#abb2bf">,</span> <span style="color:#e5c07b">boolean</span> <span style="color:#e06c75">ui</span> <span style="color:#c678dd">returns</span> <span style="color:#c678dd">nothing</span>

<span style="color:#7f848e">//============================================================================</span>
<span style="color:#7f848e">//</span> <span style="color:#7f848e">Trackable</span> <span style="color:#7f848e">API</span>
<span style="color:#c678dd">native</span> <span style="color:#61afef">CreateTrackable</span> <span style="color:#c678dd">takes</span> <span style="color:#e5c07b">string</span> <span style="color:#e06c75">trackableModelPath</span><span style="color:#abb2bf">,</span> <span style="color:#e5c07b">real</span> <span style="color:#e06c75">x</span><span style="color:#abb2bf">,</span> <span style="color:#e5c07b">real</span> <span style="color:#e06c75">y</span><span style="color:#abb2bf">,</span> <span style="color:#e5c07b">real</span> <span style="color:#e06c75">facing</span> <span style="color:#c678dd">returns</span> <span style="color:#e5c07b">trackable</span>

<span style="color:#7f848e">//============================================================================</span>
<span style="color:#7f848e">//</span> <span style="color:#7f848e">Quest</span> <span style="color:#7f848e">API</span>
<span style="color:#c678dd">native</span> <span style="color:#61afef">CreateQuest</span> <span style="color:#c678dd">takes</span> <span style="color:#c678dd">nothing</span> <span style="color:#c678dd">returns</span> <span style="color:#e5c07b">quest</span>
<span style="color:#c678dd">native</span> <span style="color:#61afef">DestroyQuest</span> <span style="color:#c678dd">takes</span> <span style="color:#e5c07b">quest</span> <span style="color:#e06c75">whichQuest</span> <span style="color:#c678dd">returns</span> <span style="color:#c678dd">nothing</span>
<span style="color:#c678dd">native</span> <span style="color:#61afef">QuestSetTitle</span> <span style="color:#c678dd">takes</span> <span style="color:#e5c07b">quest</span> <span style="color:#e06c75">whichQuest</span><span style="color:#abb2bf">,</span> <span style="color:#e5c07b">string</span> <span style="color:#e06c75">title</span> <span style="color:#c678dd">returns</span> <span style="color:#c678dd">nothing</span>
<span style="color:#c678dd">native</span> <span style="color:#61afef">QuestSetDescription</span> <span style="color:#c678dd">takes</span> <span style="color:#e5c07b">quest</span> <span style="color:#e06c75">whichQuest</span><span style="color:#abb2bf">,</span> <span style="color:#e5c07b">string</span> <span style="color:#e06c75">description</span> <span style="color:#c678dd">returns</span> <span style="color:#c678dd">nothing</span>
<span style="color:#c678dd">native</span> <span style="color:#61afef">QuestSetIconPath</span> <span style="color:#c678dd">takes</span> <span style="color:#e5c07b">quest</span> <span style="color:#e06c75">whichQuest</span><span style="color:#abb2bf">,</span> <span style="color:#e5c07b">string</span> <span style="color:#e06c75">iconPath</span> <span style="color:#c678dd">returns</span> <span style="color:#c678dd">nothing</span>

<span style="color:#c678dd">native</span> <span style="color:#61afef">QuestSetRequired</span> <span style="color:#c678dd">takes</span> <span style="color:#e5c07b">quest</span> <span style="color:#e06c75">whichQuest</span><span style="color:#abb2bf">,</span> <span style="color:#e5c07b">boolean</span> <span style="color:#e06c75">required</span> <span style="color:#c678dd">returns</span> <span style="color:#c678dd">nothing</span>
<span style="color:#c678dd">native</span> <span style="color:#61afef">QuestSetCompleted</span> <span style="color:#c678dd">takes</span> <span style="color:#e5c07b">quest</span> <span style="color:#e06c75">whichQuest</span><span style="color:#abb2bf">,</span> <span style="color:#e5c07b">boolean</span> <span style="color:#e06c75">completed</span> <span style="color:#c678dd">returns</span> <span style="color:#c678dd">nothing</span>
<span style="color:#c678dd">native</span> <span style="color:#61afef">QuestSetDiscovered</span> <span style="color:#c678dd">takes</span> <span style="color:#e5c07b">quest</span> <span style="color:#e06c75">whichQuest</span><span style="color:#abb2bf">,</span> <span style="color:#e5c07b">boolean</span> <span style="color:#e06c75">discovered</span> <span style="color:#c678dd">returns</span> <span style="color:#c678dd">nothing</span>
<span style="color:#c678dd">native</span> <span style="color:#61afef">QuestSetFailed</span> <span style="color:#c678dd">takes</span> <span style="color:#e5c07b">quest</span> <span style="color:#e06c75">whichQuest</span><span style="color:#abb2bf">,</span> <span style="color:#e5c07b">boolean</span> <span style="color:#e06c75">failed</span> <span style="color:#c678dd">returns</span> <span style="color:#c678dd">nothing</span>
<span style="color:#c678dd">native</span> <span style="color:#61afef">QuestSetEnabled</span> <span style="color:#c678dd">takes</span> <span style="color:#e5c07b">quest</span> <span style="color:#e06c75">whichQuest</span><span style="color:#abb2bf">,</span> <span style="color:#e5c07b">boolean</span> <span style="color:#e06c75">enabled</span>  <span style="color:#c678dd">returns</span> <span style="color:#c678dd">nothing</span>

<span style="color:#c678dd">native</span> <span style="color:#61afef">IsQuestRequired</span> <span style="color:#c678dd">takes</span> <span style="color:#e5c07b">quest</span> <span style="color:#e06c75">whichQuest</span> <span style="color:#c678dd">returns</span> <span style="color:#e5c07b">boolean</span>
<span style="color:#c678dd">native</span> <span style="color:#61afef">IsQuestCompleted</span> <span style="color:#c678dd">takes</span> <span style="color:#e5c07b">quest</span> <span style="color:#e06c75">whichQuest</span> <span style="color:#c678dd">returns</span> <span style="color:#e5c07b">boolean</span>
<span style="color:#c678dd">native</span> <span style="color:#61afef">IsQuestDiscovered</span> <span style="color:#c678dd">takes</span> <span style="color:#e5c07b">quest</span> <span style="color:#e06c75">whichQuest</span> <span style="color:#c678dd">returns</span> <span style="color:#e5c07b">boolean</span>
<span style="color:#c678dd">native</span> <span style="color:#61afef">IsQuestFailed</span> <span style="color:#c678dd">takes</span> <span style="color:#e5c07b">quest</span> <span style="color:#e06c75">whichQuest</span> <span style="color:#c678dd">returns</span> <span style="color:#e5c07b">boolean</span>
<span style="color:#c678dd">native</span> <span style="color:#61afef">IsQuestEnabled</span> <span style="color:#c678dd">takes</span> <span style="color:#e5c07b">quest</span> <span style="color:#e06c75">whichQuest</span> <span style="color:#c678dd">returns</span> <span style="color:#e5c07b">boolean</span>

<span style="color:#c678dd">native</span> <span style="color:#61afef">QuestCreateItem</span> <span style="color:#c678dd">takes</span> <span style="color:#e5c07b">quest</span> <span style="color:#e06c75">whichQuest</span> <span style="color:#c678dd">returns</span> <span style="color:#e5c07b">questitem</span>
<span style="color:#c678dd">native</span> <span style="color:#61afef">QuestItemSetDescription</span> <span style="color:#c678dd">takes</span> <span style="color:#e5c07b">questitem</span> <span style="color:#e06c75">whichQuestItem</span><span style="color:#abb2bf">,</span> <span style="color:#e5c07b">string</span> <span style="color:#e06c75">description</span> <span style="color:#c678dd">returns</span> <span style="color:#c678dd">nothing</span>
<span style="color:#c678dd">native</span> <span style="color:#61afef">QuestItemSetCompleted</span> <span style="color:#c678dd">takes</span> <span style="color:#e5c07b">questitem</span> <span style="color:#e06c75">whichQuestItem</span><span style="color:#abb2bf">,</span> <span style="color:#e5c07b">boolean</span> <span style="color:#e06c75">completed</span> <span style="color:#c678dd">returns</span> <span style="color:#c678dd">nothing</span>

<span style="color:#c678dd">native</span> <span style="color:#61afef">IsQuestItemCompleted</span> <span style="color:#c678dd">takes</span> <span style="color:#e5c07b">questitem</span> <span style="color:#e06c75">whichQuestItem</span> <span style="color:#c678dd">returns</span> <span style="color:#e5c07b">boolean</span>

<span style="color:#c678dd">native</span> <span style="color:#61afef">CreateDefeatCondition</span> <span style="color:#c678dd">takes</span> <span style="color:#c678dd">nothing</span> <span style="color:#c678dd">returns</span> <span style="color:#e5c07b">defeatcondition</span>
<span style="color:#c678dd">native</span> <span style="color:#61afef">DestroyDefeatCondition</span> <span style="color:#c678dd">takes</span> <span style="color:#e5c07b">defeatcondition</span> <span style="color:#e06c75">whichCondition</span> <span style="color:#c678dd">returns</span> <span style="color:#c678dd">nothing</span>
<span style="color:#c678dd">native</span> <span style="color:#61afef">DefeatConditionSetDescription</span> <span style="color:#c678dd">takes</span> <span style="color:#e5c07b">defeatcondition</span> <span style="color:#e06c75">whichCondition</span><span style="color:#abb2bf">,</span> <span style="color:#e5c07b">string</span> <span style="color:#e06c75">description</span> <span style="color:#c678dd">returns</span> <span style="color:#c678dd">nothing</span>

<span style="color:#c678dd">native</span> <span style="color:#61afef">FlashQuestDialogButton</span> <span style="color:#c678dd">takes</span> <span style="color:#c678dd">nothing</span> <span style="color:#c678dd">returns</span> <span style="color:#c678dd">nothing</span>
<span style="color:#c678dd">native</span> <span style="color:#61afef">ForceQuestDialogUpdate</span> <span style="color:#c678dd">takes</span> <span style="color:#c678dd">nothing</span> <span style="color:#c678dd">returns</span> <span style="color:#c678dd">nothing</span>

<span style="color:#7f848e">//============================================================================</span>
<span style="color:#7f848e">//</span> <span style="color:#7f848e">Timer</span> <span style="color:#7f848e">Dialog</span> <span style="color:#7f848e">API</span>
<span style="color:#c678dd">native</span> <span style="color:#61afef">CreateTimerDialog</span> <span style="color:#c678dd">takes</span> <span style="color:#e5c07b">timer</span> <span style="color:#e06c75">whichTimer</span> <span style="color:#c678dd">returns</span> <span style="color:#e5c07b">timerdialog</span>
<span style="color:#c678dd">native</span> <span style="color:#61afef">DestroyTimerDialog</span> <span style="color:#c678dd">takes</span> <span style="color:#e5c07b">timerdialog</span> <span style="color:#e06c75">whichDialog</span> <span style="color:#c678dd">returns</span> <span style="color:#c678dd">nothing</span>
<span style="color:#c678dd">native</span> <span style="color:#61afef">TimerDialogSetTitle</span> <span style="color:#c678dd">takes</span> <span style="color:#e5c07b">timerdialog</span> <span style="color:#e06c75">whichDialog</span><span style="color:#abb2bf">,</span> <span style="color:#e5c07b">string</span> <span style="color:#e06c75">title</span> <span style="color:#c678dd">returns</span> <span style="color:#c678dd">nothing</span>
<span style="color:#c678dd">native</span> <span style="color:#61afef">TimerDialogSetTitleColor</span> <span style="color:#c678dd">takes</span> <span style="color:#e5c07b">timerdialog</span> <span style="color:#e06c75">whichDialog</span><span style="color:#abb2bf">,</span> <span style="color:#e5c07b">integer</span> <span style="color:#e06c75">red</span><span style="color:#abb2bf">,</span> <span style="color:#e5c07b">integer</span> <span style="color:#e06c75">green</span><span style="color:#abb2bf">,</span> <span style="color:#e5c07b">integer</span> <span style="color:#e06c75">blue</span><span style="color:#abb2bf">,</span> <span style="color:#e5c07b">integer</span> <span style="color:#e06c75">alpha</span> <span style="color:#c678dd">returns</span> <span style="color:#c678dd">nothing</span>
<span style="color:#c678dd">native</span> <span style="color:#61afef">TimerDialogSetTimeColor</span> <span style="color:#c678dd">takes</span> <span style="color:#e5c07b">timerdialog</span> <span style="color:#e06c75">whichDialog</span><span style="color:#abb2bf">,</span> <span style="color:#e5c07b">integer</span> <span style="color:#e06c75">red</span><span style="color:#abb2bf">,</span> <span style="color:#e5c07b">integer</span> <span style="color:#e06c75">green</span><span style="color:#abb2bf">,</span> <span style="color:#e5c07b">integer</span> <span style="color:#e06c75">blue</span><span style="color:#abb2bf">,</span> <span style="color:#e5c07b">integer</span> <span style="color:#e06c75">alpha</span> <span style="color:#c678dd">returns</span> <span style="color:#c678dd">nothing</span>
<span style="color:#c678dd">native</span> <span style="color:#61afef">TimerDialogSetSpeed</span> <span style="color:#c678dd">takes</span> <span style="color:#e5c07b">timerdialog</span> <span style="color:#e06c75">whichDialog</span><span style="color:#abb2bf">,</span> <span style="color:#e5c07b">real</span> <span style="color:#e06c75">speedMultFactor</span> <span style="color:#c678dd">returns</span> <span style="color:#c678dd">nothing</span>
<span style="color:#c678dd">native</span> <span style="color:#61afef">TimerDialogDisplay</span> <span style="color:#c678dd">takes</span> <span style="color:#e5c07b">timerdialog</span> <span style="color:#e06c75">whichDialog</span><span style="color:#abb2bf">,</span> <span style="color:#e5c07b">boolean</span> <span style="color:#e06c75">display</span> <span style="color:#c678dd">returns</span> <span style="color:#c678dd">nothing</span>
<span style="color:#c678dd">native</span> <span style="color:#61afef">IsTimerDialogDisplayed</span> <span style="color:#c678dd">takes</span> <span style="color:#e5c07b">timerdialog</span> <span style="color:#e06c75">whichDialog</span> <span style="color:#c678dd">returns</span> <span style="color:#e5c07b">boolean</span>
<span style="color:#c678dd">native</span> <span style="color:#61afef">TimerDialogSetRealTimeRemaining</span> <span style="color:#c678dd">takes</span> <span style="color:#e5c07b">timerdialog</span> <span style="color:#e06c75">whichDialog</span><span style="color:#abb2bf">,</span> <span style="color:#e5c07b">real</span> <span style="color:#e06c75">timeRemaining</span> <span style="color:#c678dd">returns</span> <span style="color:#c678dd">nothing</span>

<span style="color:#7f848e">//============================================================================</span>
<span style="color:#7f848e">//</span> <span style="color:#7f848e">Leaderboard</span> <span style="color:#7f848e">API</span>

<span style="color:#7f848e">//</span> <span style="color:#7f848e">Create</span> <span style="color:#7f848e">a</span> <span style="color:#7f848e">leaderboard</span> <span style="color:#7f848e">object</span>
<span style="color:#c678dd">native</span> <span style="color:#61afef">CreateLeaderboard</span> <span style="color:#c678dd">takes</span> <span style="color:#c678dd">nothing</span> <span style="color:#c678dd">returns</span> <span style="color:#e5c07b">leaderboard</span>
<span style="color:#c678dd">native</span> <span style="color:#61afef">DestroyLeaderboard</span> <span style="color:#c678dd">takes</span> <span style="color:#e5c07b">leaderboard</span> <span style="color:#e06c75">whichLeaderboard</span> <span style="color:#c678dd">returns</span> <span style="color:#c678dd">nothing</span>

<span style="color:#c678dd">native</span> <span style="color:#61afef">LeaderboardDisplay</span> <span style="color:#c678dd">takes</span> <span style="color:#e5c07b">leaderboard</span> <span style="color:#e06c75">whichLeaderboard</span><span style="color:#abb2bf">,</span> <span style="color:#e5c07b">boolean</span> <span style="color:#e06c75">show</span> <span style="color:#c678dd">returns</span> <span style="color:#c678dd">nothing</span>
<span style="color:#c678dd">native</span> <span style="color:#61afef">IsLeaderboardDisplayed</span> <span style="color:#c678dd">takes</span> <span style="color:#e5c07b">leaderboard</span> <span style="color:#e06c75">whichLeaderboard</span> <span style="color:#c678dd">returns</span> <span style="color:#e5c07b">boolean</span>

<span style="color:#c678dd">native</span> <span style="color:#61afef">LeaderboardGetItemCount</span> <span style="color:#c678dd">takes</span> <span style="color:#e5c07b">leaderboard</span> <span style="color:#e06c75">whichLeaderboard</span> <span style="color:#c678dd">returns</span> <span style="color:#e5c07b">integer</span>

<span style="color:#c678dd">native</span> <span style="color:#61afef">LeaderboardSetSizeByItemCount</span> <span style="color:#c678dd">takes</span> <span style="color:#e5c07b">leaderboard</span> <span style="color:#e06c75">whichLeaderboard</span><span style="color:#abb2bf">,</span> <span style="color:#e5c07b">integer</span> <span style="color:#e06c75">count</span> <span style="color:#c678dd">returns</span> <span style="color:#c678dd">nothing</span>
<span style="color:#c678dd">native</span> <span style="color:#61afef">LeaderboardAddItem</span> <span style="color:#c678dd">takes</span> <span style="color:#e5c07b">leaderboard</span> <span style="color:#e06c75">whichLeaderboard</span><span style="color:#abb2bf">,</span> <span style="color:#e5c07b">string</span> <span style="color:#e06c75">label</span><span style="color:#abb2bf">,</span> <span style="color:#e5c07b">integer</span> <span style="color:#e06c75">value</span><span style="color:#abb2bf">,</span> <span style="color:#e5c07b">player</span> <span style="color:#e06c75">whichPlayer</span> <span style="color:#c678dd">returns</span> <span style="color:#c678dd">nothing</span>
<span style="color:#c678dd">native</span> <span style="color:#61afef">LeaderboardRemoveItem</span> <span style="color:#c678dd">takes</span> <span style="color:#e5c07b">leaderboard</span> <span style="color:#e06c75">whichLeaderboard</span><span style="color:#abb2bf">,</span> <span style="color:#e5c07b">integer</span> <span style="color:#e06c75">index</span> <span style="color:#c678dd">returns</span> <span style="color:#c678dd">nothing</span>
<span style="color:#c678dd">native</span> <span style="color:#61afef">LeaderboardRemovePlayerItem</span> <span style="color:#c678dd">takes</span> <span style="color:#e5c07b">leaderboard</span> <span style="color:#e06c75">whichLeaderboard</span><span style="color:#abb2bf">,</span> <span style="color:#e5c07b">player</span> <span style="color:#e06c75">whichPlayer</span> <span style="color:#c678dd">returns</span> <span style="color:#c678dd">nothing</span>
<span style="color:#c678dd">native</span> <span style="color:#61afef">LeaderboardClear</span> <span style="color:#c678dd">takes</span> <span style="color:#e5c07b">leaderboard</span> <span style="color:#e06c75">whichLeaderboard</span> <span style="color:#c678dd">returns</span> <span style="color:#c678dd">nothing</span>

<span style="color:#c678dd">native</span> <span style="color:#61afef">LeaderboardSortItemsByValue</span> <span style="color:#c678dd">takes</span> <span style="color:#e5c07b">leaderboard</span> <span style="color:#e06c75">whichLeaderboard</span><span style="color:#abb2bf">,</span> <span style="color:#e5c07b">boolean</span> <span style="color:#e06c75">ascending</span> <span style="color:#c678dd">returns</span> <span style="color:#c678dd">nothing</span>
<span style="color:#c678dd">native</span> <span style="color:#61afef">LeaderboardSortItemsByPlayer</span> <span style="color:#c678dd">takes</span> <span style="color:#e5c07b">leaderboard</span> <span style="color:#e06c75">whichLeaderboard</span><span style="color:#abb2bf">,</span> <span style="color:#e5c07b">boolean</span> <span style="color:#e06c75">ascending</span> <span style="color:#c678dd">returns</span> <span style="color:#c678dd">nothing</span>
<span style="color:#c678dd">native</span> <span style="color:#61afef">LeaderboardSortItemsByLabel</span> <span style="color:#c678dd">takes</span> <span style="color:#e5c07b">leaderboard</span> <span style="color:#e06c75">whichLeaderboard</span><span style="color:#abb2bf">,</span> <span style="color:#e5c07b">boolean</span> <span style="color:#e06c75">ascending</span> <span style="color:#c678dd">returns</span> <span style="color:#c678dd">nothing</span>

<span style="color:#c678dd">native</span> <span style="color:#61afef">LeaderboardHasPlayerItem</span> <span style="color:#c678dd">takes</span> <span style="color:#e5c07b">leaderboard</span> <span style="color:#e06c75">whichLeaderboard</span><span style="color:#abb2bf">,</span> <span style="color:#e5c07b">player</span> <span style="color:#e06c75">whichPlayer</span> <span style="color:#c678dd">returns</span> <span style="color:#e5c07b">boolean</span>
<span style="color:#c678dd">native</span> <span style="color:#61afef">LeaderboardGetPlayerIndex</span> <span style="color:#c678dd">takes</span> <span style="color:#e5c07b">leaderboard</span> <span style="color:#e06c75">whichLeaderboard</span><span style="color:#abb2bf">,</span> <span style="color:#e5c07b">player</span> <span style="color:#e06c75">whichPlayer</span> <span style="color:#c678dd">returns</span> <span style="color:#e5c07b">integer</span>
<span style="color:#c678dd">native</span> <span style="color:#61afef">LeaderboardSetLabel</span> <span style="color:#c678dd">takes</span> <span style="color:#e5c07b">leaderboard</span> <span style="color:#e06c75">whichLeaderboard</span><span style="color:#abb2bf">,</span> <span style="color:#e5c07b">string</span> <span style="color:#e06c75">label</span> <span style="color:#c678dd">returns</span> <span style="color:#c678dd">nothing</span>
<span style="color:#c678dd">native</span> <span style="color:#61afef">LeaderboardGetLabelText</span> <span style="color:#c678dd">takes</span> <span style="color:#e5c07b">leaderboard</span> <span style="color:#e06c75">whichLeaderboard</span> <span style="color:#c678dd">returns</span> <span style="color:#e5c07b">string</span>

<span style="color:#c678dd">native</span> <span style="color:#61afef">PlayerSetLeaderboard</span> <span style="color:#c678dd">takes</span> <span style="color:#e5c07b">player</span> <span style="color:#e06c75">toPlayer</span><span style="color:#abb2bf">,</span> <span style="color:#e5c07b">leaderboard</span> <span style="color:#e06c75">whichLeaderboard</span> <span style="color:#c678dd">returns</span> <span style="color:#c678dd">nothing</span>
<span style="color:#c678dd">native</span> <span style="color:#61afef">PlayerGetLeaderboard</span> <span style="color:#c678dd">takes</span> <span style="color:#e5c07b">player</span> <span style="color:#e06c75">toPlayer</span> <span style="color:#c678dd">returns</span> <span style="color:#e5c07b">leaderboard</span>

<span style="color:#c678dd">native</span> <span style="color:#61afef">LeaderboardSetLabelColor</span> <span style="color:#c678dd">takes</span> <span style="color:#e5c07b">leaderboard</span> <span style="color:#e06c75">whichLeaderboard</span><span style="color:#abb2bf">,</span> <span style="color:#e5c07b">integer</span> <span style="color:#e06c75">red</span><span style="color:#abb2bf">,</span> <span style="color:#e5c07b">integer</span> <span style="color:#e06c75">green</span><span style="color:#abb2bf">,</span> <span style="color:#e5c07b">integer</span> <span style="color:#e06c75">blue</span><span style="color:#abb2bf">,</span> <span style="color:#e5c07b">integer</span> <span style="color:#e06c75">alpha</span> <span style="color:#c678dd">returns</span> <span style="color:#c678dd">nothing</span>
<span style="color:#c678dd">native</span> <span style="color:#61afef">LeaderboardSetValueColor</span> <span style="color:#c678dd">takes</span> <span style="color:#e5c07b">leaderboard</span> <span style="color:#e06c75">whichLeaderboard</span><span style="color:#abb2bf">,</span> <span style="color:#e5c07b">integer</span> <span style="color:#e06c75">red</span><span style="color:#abb2bf">,</span> <span style="color:#e5c07b">integer</span> <span style="color:#e06c75">green</span><span style="color:#abb2bf">,</span> <span style="color:#e5c07b">integer</span> <span style="color:#e06c75">blue</span><span style="color:#abb2bf">,</span> <span style="color:#e5c07b">integer</span> <span style="color:#e06c75">alpha</span> <span style="color:#c678dd">returns</span> <span style="color:#c678dd">nothing</span>
<span style="color:#c678dd">native</span> <span style="color:#61afef">LeaderboardSetStyle</span> <span style="color:#c678dd">takes</span> <span style="color:#e5c07b">leaderboard</span> <span style="color:#e06c75">whichLeaderboard</span><span style="color:#abb2bf">,</span> <span style="color:#e5c07b">boolean</span> <span style="color:#e06c75">showLabel</span><span style="color:#abb2bf">,</span> <span style="color:#e5c07b">boolean</span> <span style="color:#e06c75">showNames</span><span style="color:#abb2bf">,</span> <span style="color:#e5c07b">boolean</span> <span style="color:#e06c75">showValues</span> <span style="color:#c678dd">returns</span> <span style="color:#c678dd">nothing</span>

<span style="color:#c678dd">native</span> <span style="color:#61afef">LeaderboardSetItemValue</span> <span style="color:#c678dd">takes</span> <span style="color:#e5c07b">leaderboard</span> <span style="color:#e06c75">whichLeaderboard</span><span style="color:#abb2bf">,</span> <span style="color:#e5c07b">integer</span> <span style="color:#e06c75">whichItem</span><span style="color:#abb2bf">,</span> <span style="color:#e5c07b">integer</span> <span style="color:#e06c75">val</span> <span style="color:#c678dd">returns</span> <span style="color:#c678dd">nothing</span>
<span style="color:#c678dd">native</span> <span style="color:#61afef">LeaderboardSetItemLabel</span> <span style="color:#c678dd">takes</span> <span style="color:#e5c07b">leaderboard</span> <span style="color:#e06c75">whichLeaderboard</span><span style="color:#abb2bf">,</span> <span style="color:#e5c07b">integer</span> <span style="color:#e06c75">whichItem</span><span style="color:#abb2bf">,</span> <span style="color:#e5c07b">string</span> <span style="color:#e06c75">val</span> <span style="color:#c678dd">returns</span> <span style="color:#c678dd">nothing</span>
<span style="color:#c678dd">native</span> <span style="color:#61afef">LeaderboardSetItemStyle</span> <span style="color:#c678dd">takes</span> <span style="color:#e5c07b">leaderboard</span> <span style="color:#e06c75">whichLeaderboard</span><span style="color:#abb2bf">,</span> <span style="color:#e5c07b">integer</span> <span style="color:#e06c75">whichItem</span><span style="color:#abb2bf">,</span> <span style="color:#e5c07b">boolean</span> <span style="color:#e06c75">showLabel</span><span style="color:#abb2bf">,</span> <span style="color:#e5c07b">boolean</span> <span style="color:#e06c75">showValue</span> <span style="color:#c678dd">returns</span> <span style="color:#c678dd">nothing</span>
<span style="color:#c678dd">native</span> <span style="color:#61afef">LeaderboardSetItemLabelColor</span> <span style="color:#c678dd">takes</span> <span style="color:#e5c07b">leaderboard</span> <span style="color:#e06c75">whichLeaderboard</span><span style="color:#abb2bf">,</span> <span style="color:#e5c07b">integer</span> <span style="color:#e06c75">whichItem</span><span style="color:#abb2bf">,</span> <span style="color:#e5c07b">integer</span> <span style="color:#e06c75">red</span><span style="color:#abb2bf">,</span> <span style="color:#e5c07b">integer</span> <span style="color:#e06c75">green</span> <span style="color:#c678dd">returns</span> <span style="color:#c678dd">nothing</span>
<span style="color:#c678dd">native</span> <span style="color:#61afef">LeaderboardSetItemValueColor</span> <span style="color:#c678dd">takes</span> <span style="color:#e5c07b">leaderboard</span> <span style="color:#e06c75">whichLeaderboard</span><span style="color:#abb2bf">,</span> <span style="color:#e5c07b">integer</span> <span style="color:#e06c75">whichItem</span><span style="color:#abb2bf">,</span> <span style="color:#e5c07b">integer</span> <span style="color:#e06c75">red</span><span style="color:#abb2bf">,</span> <span style="color:#e5c07b">integer</span> <span style="color:#e06c75">green</span> <span style="color:#c678dd">returns</span> <span style="color:#c678dd">nothing</span>

<span style="color:#7f848e">//============================================================================</span>
<span style="color:#7f848e">//</span> <span style="color:#7f848e">Multiboard</span> <span style="color:#7f848e">API</span>
<span style="color:#7f848e">//============================================================================</span>

<span style="color:#7f848e">//</span> <span style="color:#7f848e">Create</span> <span style="color:#7f848e">a</span> <span style="color:#7f848e">multiboard</span> <span style="color:#7f848e">object</span>
<span style="color:#c678dd">native</span> <span style="color:#61afef">CreateMultiboard</span> <span style="color:#c678dd">takes</span> <span style="color:#c678dd">nothing</span> <span style="color:#c678dd">returns</span> <span style="color:#e5c07b">multiboard</span>
<span style="color:#c678dd">native</span> <span style="color:#61afef">DestroyMultiboard</span> <span style="color:#c678dd">takes</span> <span style="color:#e5c07b">multiboard</span> <span style="color:#e06c75">whichMultiboard</span> <span style="color:#c678dd">returns</span> <span style="color:#c678dd">nothing</span>

<span style="color:#c678dd">native</span> <span style="color:#61afef">MultiboardDisplay</span> <span style="color:#c678dd">takes</span> <span style="color:#e5c07b">multiboard</span> <span style="color:#e06c75">whichMultiboard</span><span style="color:#abb2bf">,</span> <span style="color:#e5c07b">boolean</span> <span style="color:#e06c75">show</span> <span style="color:#c678dd">returns</span> <span style="color:#c678dd">nothing</span>
<span style="color:#c678dd">native</span> <span style="color:#61afef">IsMultiboardDisplayed</span> <span style="color:#c678dd">takes</span> <span style="color:#e5c07b">multiboard</span> <span style="color:#e06c75">whichMultiboard</span> <span style="color:#c678dd">returns</span> <span style="color:#e5c07b">boolean</span>

<span style="color:#c678dd">native</span> <span style="color:#61afef">MultiboardMinimize</span> <span style="color:#c678dd">takes</span> <span style="color:#e5c07b">multiboard</span> <span style="color:#e06c75">whichMultiboard</span><span style="color:#abb2bf">,</span> <span style="color:#e5c07b">boolean</span> <span style="color:#e06c75">minimize</span> <span style="color:#c678dd">returns</span> <span style="color:#c678dd">nothing</span>
<span style="color:#c678dd">native</span> <span style="color:#61afef">IsMultiboardMinimized</span> <span style="color:#c678dd">takes</span> <span style="color:#e5c07b">multiboard</span> <span style="color:#e06c75">whichMultiboard</span> <span style="color:#c678dd">returns</span> <span style="color:#e5c07b">boolean</span>
<span style="color:#c678dd">native</span> <span style="color:#61afef">MultiboardClear</span> <span style="color:#c678dd">takes</span> <span style="color:#e5c07b">multiboard</span> <span style="color:#e06c75">whichMultiboard</span> <span style="color:#c678dd">returns</span> <span style="color:#c678dd">nothing</span>

<span style="color:#c678dd">native</span> <span style="color:#61afef">MultiboardSetTitleText</span> <span style="color:#c678dd">takes</span> <span style="color:#e5c07b">multiboard</span> <span style="color:#e06c75">whichMultiboard</span><span style="color:#abb2bf">,</span> <span style="color:#e5c07b">string</span> <span style="color:#e06c75">label</span> <span style="color:#c678dd">returns</span> <span style="color:#c678dd">nothing</span>
<span style="color:#c678dd">native</span> <span style="color:#61afef">MultiboardGetTitleText</span> <span style="color:#c678dd">takes</span> <span style="color:#e5c07b">multiboard</span> <span style="color:#e06c75">whichMultiboard</span> <span style="color:#c678dd">returns</span> <span style="color:#e5c07b">string</span>
<span style="color:#c678dd">native</span> <span style="color:#61afef">MultiboardSetTitleTextColor</span> <span style="color:#c678dd">takes</span> <span style="color:#e5c07b">multiboard</span> <span style="color:#e06c75">whichMultiboard</span><span style="color:#abb2bf">,</span> <span style="color:#e5c07b">integer</span> <span style="color:#e06c75">red</span><span style="color:#abb2bf">,</span> <span style="color:#e5c07b">integer</span> <span style="color:#e06c75">green</span><span style="color:#abb2bf">,</span> <span style="color:#e5c07b">integer</span> <span style="color:#e06c75">blue</span><span style="color:#abb2bf">,</span> <span style="color:#e5c07b">integer</span> <span style="color:#e06c75">alpha</span> <span style="color:#c678dd">returns</span> <span style="color:#c678dd">nothing</span>

<span style="color:#c678dd">native</span> <span style="color:#61afef">MultiboardGetRowCount</span> <span style="color:#c678dd">takes</span> <span style="color:#e5c07b">multiboard</span> <span style="color:#e06c75">whichMultiboard</span> <span style="color:#c678dd">returns</span> <span style="color:#e5c07b">integer</span>
<span style="color:#c678dd">native</span> <span style="color:#61afef">MultiboardGetColumnCount</span> <span style="color:#c678dd">takes</span> <span style="color:#e5c07b">multiboard</span> <span style="color:#e06c75">whichMultiboard</span> <span style="color:#c678dd">returns</span> <span style="color:#e5c07b">integer</span>

<span style="color:#c678dd">native</span> <span style="color:#61afef">MultiboardSetColumnCount</span> <span style="color:#c678dd">takes</span> <span style="color:#e5c07b">multiboard</span> <span style="color:#e06c75">whichMultiboard</span><span style="color:#abb2bf">,</span> <span style="color:#e5c07b">integer</span> <span style="color:#e06c75">count</span> <span style="color:#c678dd">returns</span> <span style="color:#c678dd">nothing</span>
<span style="color:#c678dd">native</span> <span style="color:#61afef">MultiboardSetRowCount</span> <span style="color:#c678dd">takes</span> <span style="color:#e5c07b">multiboard</span> <span style="color:#e06c75">whichMultiboard</span><span style="color:#abb2bf">,</span> <span style="color:#e5c07b">integer</span> <span style="color:#e06c75">count</span> <span style="color:#c678dd">returns</span> <span style="color:#c678dd">nothing</span>

<span style="color:#7f848e">//</span> <span style="color:#7f848e">broadcast</span> <span style="color:#7f848e">settings</span> <span style="color:#7f848e">to</span> <span style="color:#7f848e">all</span> <span style="color:#7f848e">items</span>
<span style="color:#c678dd">native</span> <span style="color:#61afef">MultiboardSetItemsStyle</span> <span style="color:#c678dd">takes</span> <span style="color:#e5c07b">multiboard</span> <span style="color:#e06c75">whichMultiboard</span><span style="color:#abb2bf">,</span> <span style="color:#e5c07b">boolean</span> <span style="color:#e06c75">showValues</span><span style="color:#abb2bf">,</span> <span style="color:#e5c07b">boolean</span> <span style="color:#e06c75">showIcons</span> <span style="color:#c678dd">returns</span> <span style="color:#c678dd">nothing</span>
<span style="color:#c678dd">native</span> <span style="color:#61afef">MultiboardSetItemsValue</span> <span style="color:#c678dd">takes</span> <span style="color:#e5c07b">multiboard</span> <span style="color:#e06c75">whichMultiboard</span><span style="color:#abb2bf">,</span> <span style="color:#e5c07b">string</span> <span style="color:#e06c75">value</span> <span style="color:#c678dd">returns</span> <span style="color:#c678dd">nothing</span>
<span style="color:#c678dd">native</span> <span style="color:#61afef">MultiboardSetItemsValueColor</span> <span style="color:#c678dd">takes</span> <span style="color:#e5c07b">multiboard</span> <span style="color:#e06c75">whichMultiboard</span><span style="color:#abb2bf">,</span> <span style="color:#e5c07b">integer</span> <span style="color:#e06c75">red</span><span style="color:#abb2bf">,</span> <span style="color:#e5c07b">integer</span> <span style="color:#e06c75">green</span><span style="color:#abb2bf">,</span> <span style="color:#e5c07b">integer</span> <span style="color:#e06c75">blue</span><span style="color:#abb2bf">,</span> <span style="color:#e5c07b">integer</span> <span style="color:#e06c75">alpha</span> <span style="color:#c678dd">returns</span> <span style="color:#c678dd">nothing</span>
<span style="color:#c678dd">native</span> <span style="color:#61afef">MultiboardSetItemsWidth</span> <span style="color:#c678dd">takes</span> <span style="color:#e5c07b">multiboard</span> <span style="color:#e06c75">whichMultiboard</span><span style="color:#abb2bf">,</span> <span style="color:#e5c07b">real</span> <span style="color:#e06c75">width</span> <span style="color:#c678dd">returns</span> <span style="color:#c678dd">nothing</span>
<span style="color:#c678dd">native</span> <span style="color:#61afef">MultiboardSetItemsIcon</span> <span style="color:#c678dd">takes</span> <span style="color:#e5c07b">multiboard</span> <span style="color:#e06c75">whichMultiboard</span><span style="color:#abb2bf">,</span> <span style="color:#e5c07b">string</span> <span style="color:#e06c75">iconPath</span> <span style="color:#c678dd">returns</span> <span style="color:#c678dd">nothing</span>


<span style="color:#7f848e">//</span> <span style="color:#7f848e">funcs</span> <span style="color:#7f848e">for</span> <span style="color:#7f848e">modifying</span> <span style="color:#7f848e">individual</span> <span style="color:#7f848e">items</span>
<span style="color:#c678dd">native</span> <span style="color:#61afef">MultiboardGetItem</span> <span style="color:#c678dd">takes</span> <span style="color:#e5c07b">multiboard</span> <span style="color:#e06c75">whichMultiboard</span><span style="color:#abb2bf">,</span> <span style="color:#e5c07b">integer</span> <span style="color:#e06c75">row</span><span style="color:#abb2bf">,</span> <span style="color:#e5c07b">integer</span> <span style="color:#e06c75">column</span> <span style="color:#c678dd">returns</span> <span style="color:#e5c07b">multiboarditem</span>
<span style="color:#c678dd">native</span> <span style="color:#61afef">MultiboardReleaseItem</span> <span style="color:#c678dd">takes</span> <span style="color:#e5c07b">multiboarditem</span> <span style="color:#e06c75">whichMultiboardItem</span> <span style="color:#c678dd">returns</span> <span style="color:#c678dd">nothing</span>

<span style="color:#c678dd">native</span> <span style="color:#61afef">MultiboardSetItemStyle</span> <span style="color:#c678dd">takes</span> <span style="color:#e5c07b">multiboarditem</span> <span style="color:#e06c75">whichMultiboardItem</span><span style="color:#abb2bf">,</span> <span style="color:#e5c07b">boolean</span> <span style="color:#e06c75">showValue</span><span style="color:#abb2bf">,</span> <span style="color:#e5c07b">boolean</span> <span style="color:#e06c75">showIcon</span> <span style="color:#c678dd">returns</span> <span style="color:#c678dd">nothing</span>
<span style="color:#c678dd">native</span> <span style="color:#61afef">MultiboardSetItemValue</span> <span style="color:#c678dd">takes</span> <span style="color:#e5c07b">multiboarditem</span> <span style="color:#e06c75">whichMultiboardItem</span><span style="color:#abb2bf">,</span> <span style="color:#e5c07b">string</span> <span style="color:#e06c75">val</span> <span style="color:#c678dd">returns</span> <span style="color:#c678dd">nothing</span>
<span style="color:#c678dd">native</span> <span style="color:#61afef">MultiboardSetItemValueColor</span> <span style="color:#c678dd">takes</span> <span style="color:#e5c07b">multiboarditem</span> <span style="color:#e06c75">whichMultiboardItem</span><span style="color:#abb2bf">,</span> <span style="color:#e5c07b">integer</span> <span style="color:#e06c75">red</span><span style="color:#abb2bf">,</span> <span style="color:#e5c07b">integer</span> <span style="color:#e06c75">green</span><span style="color:#abb2bf">,</span> <span style="color:#e5c07b">integer</span> <span style="color:#e06c75">blue</span><span style="color:#abb2bf">,</span> <span style="color:#e5c07b">integer</span> <span style="color:#e06c75">alpha</span> <span style="color:#c678dd">returns</span> <span style="color:#c678dd">nothing</span>
<span style="color:#c678dd">native</span> <span style="color:#61afef">MultiboardSetItemWidth</span> <span style="color:#c678dd">takes</span> <span style="color:#e5c07b">multiboarditem</span> <span style="color:#e06c75">whichMultiboardItem</span><span style="color:#abb2bf">,</span> <span style="color:#e5c07b">real</span> <span style="color:#e06c75">width</span> <span style="color:#c678dd">returns</span> <span style="color:#c678dd">nothing</span>
<span style="color:#c678dd">native</span> <span style="color:#61afef">MultiboardSetItemIcon</span> <span style="color:#c678dd">takes</span> <span style="color:#e5c07b">multiboarditem</span> <span style="color:#e06c75">whichMultiboardItem</span><span style="color:#abb2bf">,</span> <span style="color:#e5c07b">string</span> <span style="color:#e06c75">iconFileName</span> <span style="color:#c678dd">returns</span> <span style="color:#c678dd">nothing</span>

<span style="color:#7f848e">//</span> <span style="color:#7f848e">meant</span> <span style="color:#7f848e">to</span> <span style="color:#7f848e">unequivocally</span> <span style="color:#7f848e">suspend</span> <span style="color:#7f848e">display</span> <span style="color:#7f848e">of</span> <span style="color:#7f848e">existing</span> <span style="color:#7f848e">and</span>
<span style="color:#7f848e">//</span> <span style="color:#7f848e">subsequently</span> <span style="color:#7f848e">displayed</span> <span style="color:#7f848e">multiboards</span>
<span style="color:#7f848e">//</span>
<span style="color:#c678dd">native</span> <span style="color:#61afef">MultiboardSuppressDisplay</span> <span style="color:#c678dd">takes</span> <span style="color:#e5c07b">boolean</span> <span style="color:#e06c75">flag</span> <span style="color:#c678dd">returns</span> <span style="color:#c678dd">nothing</span>

<span style="color:#7f848e">//============================================================================</span>
<span style="color:#7f848e">//</span> <span style="color:#7f848e">Camera</span> <span style="color:#7f848e">API</span>
<span style="color:#c678dd">native</span> <span style="color:#61afef">SetCameraPosition</span> <span style="color:#c678dd">takes</span> <span style="color:#e5c07b">real</span> <span style="color:#e06c75">x</span><span style="color:#abb2bf">,</span> <span style="color:#e5c07b">real</span> <span style="color:#e06c75">y</span> <span style="color:#c678dd">returns</span> <span style="color:#c678dd">nothing</span>
<span style="color:#c678dd">native</span> <span style="color:#61afef">SetCameraQuickPosition</span> <span style="color:#c678dd">takes</span> <span style="color:#e5c07b">real</span> <span style="color:#e06c75">x</span><span style="color:#abb2bf">,</span> <span style="color:#e5c07b">real</span> <span style="color:#e06c75">y</span> <span style="color:#c678dd">returns</span> <span style="color:#c678dd">nothing</span>
<span style="color:#c678dd">native</span> <span style="color:#61afef">SetCameraBounds</span> <span style="color:#c678dd">takes</span> <span style="color:#e5c07b">real</span> <span style="color:#e06c75">x1</span><span style="color:#abb2bf">,</span> <span style="color:#e5c07b">real</span> <span style="color:#e06c75">y1</span><span style="color:#abb2bf">,</span> <span style="color:#e5c07b">real</span> <span style="color:#e06c75">x2</span><span style="color:#abb2bf">,</span> <span style="color:#e5c07b">real</span> <span style="color:#e06c75">y2</span><span style="color:#abb2bf">,</span> <span style="color:#e5c07b">real</span> <span style="color:#e06c75">x3</span><span style="color:#abb2bf">,</span> <span style="color:#e5c07b">real</span> <span style="color:#e06c75">y3</span><span style="color:#abb2bf">,</span> <span style="color:#e5c07b">real</span> <span style="color:#e06c75">x4</span><span style="color:#abb2bf">,</span> <span style="color:#e5c07b">real</span> <span style="color:#e06c75">y4</span> <span style="color:#c678dd">returns</span> <span style="color:#c678dd">nothing</span>
<span style="color:#c678dd">native</span> <span style="color:#61afef">StopCamera</span> <span style="color:#c678dd">takes</span> <span style="color:#c678dd">nothing</span> <span style="color:#c678dd">returns</span> <span style="color:#c678dd">nothing</span>
<span style="color:#c678dd">native</span> <span style="color:#61afef">ResetToGameCamera</span> <span style="color:#c678dd">takes</span> <span style="color:#e5c07b">real</span> <span style="color:#e06c75">duration</span> <span style="color:#c678dd">returns</span> <span style="color:#c678dd">nothing</span>
<span style="color:#c678dd">native</span> <span style="color:#61afef">PanCameraTo</span> <span style="color:#c678dd">takes</span> <span style="color:#e5c07b">real</span> <span style="color:#e06c75">x</span><span style="color:#abb2bf">,</span> <span style="color:#e5c07b">real</span> <span style="color:#e06c75">y</span> <span style="color:#c678dd">returns</span> <span style="color:#c678dd">nothing</span>
<span style="color:#c678dd">native</span> <span style="color:#61afef">PanCameraToTimed</span> <span style="color:#c678dd">takes</span> <span style="color:#e5c07b">real</span> <span style="color:#e06c75">x</span><span style="color:#abb2bf">,</span> <span style="color:#e5c07b">real</span> <span style="color:#e06c75">y</span><span style="color:#abb2bf">,</span> <span style="color:#e5c07b">real</span> <span style="color:#e06c75">duration</span> <span style="color:#c678dd">returns</span> <span style="color:#c678dd">nothing</span>
<span style="color:#c678dd">native</span> <span style="color:#61afef">PanCameraToWithZ</span> <span style="color:#c678dd">takes</span> <span style="color:#e5c07b">real</span> <span style="color:#e06c75">x</span><span style="color:#abb2bf">,</span> <span style="color:#e5c07b">real</span> <span style="color:#e06c75">y</span><span style="color:#abb2bf">,</span> <span style="color:#e5c07b">real</span> <span style="color:#e06c75">zOffsetDest</span> <span style="color:#c678dd">returns</span> <span style="color:#c678dd">nothing</span>
<span style="color:#c678dd">native</span> <span style="color:#61afef">PanCameraToTimedWithZ</span> <span style="color:#c678dd">takes</span> <span style="color:#e5c07b">real</span> <span style="color:#e06c75">x</span><span style="color:#abb2bf">,</span> <span style="color:#e5c07b">real</span> <span style="color:#e06c75">y</span><span style="color:#abb2bf">,</span> <span style="color:#e5c07b">real</span> <span style="color:#e06c75">zOffsetDest</span><span style="color:#abb2bf">,</span> <span style="color:#e5c07b">real</span> <span style="color:#e06c75">duration</span> <span style="color:#c678dd">returns</span> <span style="color:#c678dd">nothing</span>
<span style="color:#c678dd">native</span> <span style="color:#61afef">SetCinematicCamera</span> <span style="color:#c678dd">takes</span> <span style="color:#e5c07b">string</span> <span style="color:#e06c75">cameraModelFile</span> <span style="color:#c678dd">returns</span> <span style="color:#c678dd">nothing</span>
<span style="color:#c678dd">native</span> <span style="color:#61afef">SetCameraRotateMode</span> <span style="color:#c678dd">takes</span> <span style="color:#e5c07b">real</span> <span style="color:#e06c75">x</span><span style="color:#abb2bf">,</span> <span style="color:#e5c07b">real</span> <span style="color:#e06c75">y</span><span style="color:#abb2bf">,</span> <span style="color:#e5c07b">real</span> <span style="color:#e06c75">radiansToSweep</span><span style="color:#abb2bf">,</span> <span style="color:#e5c07b">real</span> <span style="color:#e06c75">duration</span> <span style="color:#c678dd">returns</span> <span style="color:#c678dd">nothing</span>
<span style="color:#c678dd">native</span> <span style="color:#61afef">SetCameraField</span> <span style="color:#c678dd">takes</span> <span style="color:#e5c07b">camerafield</span> <span style="color:#e06c75">whichField</span><span style="color:#abb2bf">,</span> <span style="color:#e5c07b">real</span> <span style="color:#e06c75">value</span><span style="color:#abb2bf">,</span> <span style="color:#e5c07b">real</span> <span style="color:#e06c75">duration</span> <span style="color:#c678dd">returns</span> <span style="color:#c678dd">nothing</span>
<span style="color:#c678dd">native</span> <span style="color:#61afef">AdjustCameraField</span> <span style="color:#c678dd">takes</span> <span style="color:#e5c07b">camerafield</span> <span style="color:#e06c75">whichField</span><span style="color:#abb2bf">,</span> <span style="color:#e5c07b">real</span> <span style="color:#e06c75">offset</span><span style="color:#abb2bf">,</span> <span style="color:#e5c07b">real</span> <span style="color:#e06c75">duration</span> <span style="color:#c678dd">returns</span> <span style="color:#c678dd">nothing</span>
<span style="color:#c678dd">native</span> <span style="color:#61afef">SetCameraTargetController</span> <span style="color:#c678dd">takes</span> <span style="color:#e5c07b">unit</span> <span style="color:#e06c75">whichUnit</span><span style="color:#abb2bf">,</span> <span style="color:#e5c07b">real</span> <span style="color:#e06c75">xoffset</span><span style="color:#abb2bf">,</span> <span style="color:#e5c07b">real</span> <span style="color:#e06c75">yoffset</span><span style="color:#abb2bf">,</span> <span style="color:#e5c07b">boolean</span> <span style="color:#e06c75">inheritOrientation</span> <span style="color:#c678dd">returns</span> <span style="color:#c678dd">nothing</span>
<span style="color:#c678dd">native</span> <span style="color:#61afef">SetCameraOrientController</span> <span style="color:#c678dd">takes</span> <span style="color:#e5c07b">unit</span> <span style="color:#e06c75">whichUnit</span><span style="color:#abb2bf">,</span> <span style="color:#e5c07b">real</span> <span style="color:#e06c75">xoffset</span><span style="color:#abb2bf">,</span> <span style="color:#e5c07b">real</span> <span style="color:#e06c75">yoffset</span> <span style="color:#c678dd">returns</span> <span style="color:#c678dd">nothing</span>

<span style="color:#c678dd">native</span> <span style="color:#61afef">CreateCameraSetup</span> <span style="color:#c678dd">takes</span> <span style="color:#c678dd">nothing</span> <span style="color:#c678dd">returns</span> <span style="color:#e5c07b">camerasetup</span>
<span style="color:#c678dd">native</span> <span style="color:#61afef">CameraSetupSetField</span> <span style="color:#c678dd">takes</span> <span style="color:#e5c07b">camerasetup</span> <span style="color:#e06c75">whichCameraSetup</span><span style="color:#abb2bf">,</span> <span style="color:#e5c07b">camerafield</span> <span style="color:#e06c75">whichField</span><span style="color:#abb2bf">,</span> <span style="color:#e5c07b">real</span> <span style="color:#e06c75">value</span><span style="color:#abb2bf">,</span> <span style="color:#e5c07b">real</span> <span style="color:#e06c75">duration</span> <span style="color:#c678dd">returns</span> <span style="color:#c678dd">nothing</span>
<span style="color:#c678dd">native</span> <span style="color:#61afef">CameraSetupGetField</span> <span style="color:#c678dd">takes</span> <span style="color:#e5c07b">camerasetup</span> <span style="color:#e06c75">whichCameraSetup</span><span style="color:#abb2bf">,</span> <span style="color:#e5c07b">camerafield</span> <span style="color:#e06c75">whichField</span> <span style="color:#c678dd">returns</span> <span style="color:#e5c07b">real</span>
<span style="color:#c678dd">native</span> <span style="color:#61afef">CameraSetupSetDestPosition</span> <span style="color:#c678dd">takes</span> <span style="color:#e5c07b">camerasetup</span> <span style="color:#e06c75">whichCameraSetup</span><span style="color:#abb2bf">,</span> <span style="color:#e5c07b">real</span> <span style="color:#e06c75">x</span><span style="color:#abb2bf">,</span> <span style="color:#e5c07b">real</span> <span style="color:#e06c75">y</span><span style="color:#abb2bf">,</span> <span style="color:#e5c07b">real</span> <span style="color:#e06c75">duration</span> <span style="color:#c678dd">returns</span> <span style="color:#c678dd">nothing</span>
<span style="color:#c678dd">native</span> <span style="color:#61afef">CameraSetupGetDestPositionLoc</span> <span style="color:#c678dd">takes</span> <span style="color:#e5c07b">camerasetup</span> <span style="color:#e06c75">whichCameraSetup</span> <span style="color:#c678dd">returns</span> <span style="color:#e5c07b">location</span>
<span style="color:#c678dd">native</span> <span style="color:#61afef">CameraSetupGetDestPositionX</span> <span style="color:#c678dd">takes</span> <span style="color:#e5c07b">camerasetup</span> <span style="color:#e06c75">whichCameraSetup</span> <span style="color:#c678dd">returns</span> <span style="color:#e5c07b">real</span>
<span style="color:#c678dd">native</span> <span style="color:#61afef">CameraSetupGetDestPositionY</span> <span style="color:#c678dd">takes</span> <span style="color:#e5c07b">camerasetup</span> <span style="color:#e06c75">whichCameraSetup</span> <span style="color:#c678dd">returns</span> <span style="color:#e5c07b">real</span>
<span style="color:#c678dd">native</span> <span style="color:#61afef">CameraSetupApply</span> <span style="color:#c678dd">takes</span> <span style="color:#e5c07b">camerasetup</span> <span style="color:#e06c75">whichCameraSetup</span><span style="color:#abb2bf">,</span> <span style="color:#e5c07b">boolean</span> <span style="color:#e06c75">doPan</span><span style="color:#abb2bf">,</span> <span style="color:#e5c07b">boolean</span> <span style="color:#e06c75">panTimed</span> <span style="color:#c678dd">returns</span> <span style="color:#c678dd">nothing</span>
<span style="color:#c678dd">native</span> <span style="color:#61afef">CameraSetupApplyWithZ</span> <span style="color:#c678dd">takes</span> <span style="color:#e5c07b">camerasetup</span> <span style="color:#e06c75">whichCameraSetup</span><span style="color:#abb2bf">,</span> <span style="color:#e5c07b">real</span> <span style="color:#e06c75">zDestOffset</span> <span style="color:#c678dd">returns</span> <span style="color:#c678dd">nothing</span>
<span style="color:#c678dd">native</span> <span style="color:#61afef">CameraSetupApplyForceDuration</span> <span style="color:#c678dd">takes</span> <span style="color:#e5c07b">camerasetup</span> <span style="color:#e06c75">whichCameraSetup</span><span style="color:#abb2bf">,</span> <span style="color:#e5c07b">boolean</span> <span style="color:#e06c75">doPan</span><span style="color:#abb2bf">,</span> <span style="color:#e5c07b">real</span> <span style="color:#e06c75">forceDuration</span> <span style="color:#c678dd">returns</span> <span style="color:#c678dd">nothing</span>
<span style="color:#c678dd">native</span> <span style="color:#61afef">CameraSetupApplyForceDurationWithZ</span> <span style="color:#c678dd">takes</span> <span style="color:#e5c07b">camerasetup</span> <span style="color:#e06c75">whichCameraSetup</span><span style="color:#abb2bf">,</span> <span style="color:#e5c07b">real</span> <span style="color:#e06c75">zDestOffset</span><span style="color:#abb2bf">,</span> <span style="color:#e5c07b">real</span> <span style="color:#e06c75">forceDuration</span> <span style="color:#c678dd">returns</span> <span style="color:#c678dd">nothing</span>

<span style="color:#c678dd">native</span> <span style="color:#61afef">CameraSetTargetNoise</span> <span style="color:#c678dd">takes</span> <span style="color:#e5c07b">real</span> <span style="color:#e06c75">mag</span><span style="color:#abb2bf">,</span> <span style="color:#e5c07b">real</span> <span style="color:#e06c75">velocity</span> <span style="color:#c678dd">returns</span> <span style="color:#c678dd">nothing</span>
<span style="color:#c678dd">native</span> <span style="color:#61afef">CameraSetSourceNoise</span> <span style="color:#c678dd">takes</span> <span style="color:#e5c07b">real</span> <span style="color:#e06c75">mag</span><span style="color:#abb2bf">,</span> <span style="color:#e5c07b">real</span> <span style="color:#e06c75">velocity</span> <span style="color:#c678dd">returns</span> <span style="color:#c678dd">nothing</span>

<span style="color:#c678dd">native</span> <span style="color:#61afef">CameraSetTargetNoiseEx</span> <span style="color:#c678dd">takes</span> <span style="color:#e5c07b">real</span> <span style="color:#e06c75">mag</span><span style="color:#abb2bf">,</span> <span style="color:#e5c07b">real</span> <span style="color:#e06c75">velocity</span><span style="color:#abb2bf">,</span> <span style="color:#e5c07b">boolean</span> <span style="color:#e06c75">vertOnly</span> <span style="color:#c678dd">returns</span> <span style="color:#c678dd">nothing</span>
<span style="color:#c678dd">native</span> <span style="color:#61afef">CameraSetSourceNoiseEx</span> <span style="color:#c678dd">takes</span> <span style="color:#e5c07b">real</span> <span style="color:#e06c75">mag</span><span style="color:#abb2bf">,</span> <span style="color:#e5c07b">real</span> <span style="color:#e06c75">velocity</span><span style="color:#abb2bf">,</span> <span style="color:#e5c07b">boolean</span> <span style="color:#e06c75">vertOnly</span> <span style="color:#c678dd">returns</span> <span style="color:#c678dd">nothing</span>

<span style="color:#c678dd">native</span> <span style="color:#61afef">CameraSetSmoothingFactor</span> <span style="color:#c678dd">takes</span> <span style="color:#e5c07b">real</span> <span style="color:#e06c75">factor</span> <span style="color:#c678dd">returns</span> <span style="color:#c678dd">nothing</span>

<span style="color:#c678dd">native</span> <span style="color:#61afef">SetCineFilterTexture</span> <span style="color:#c678dd">takes</span> <span style="color:#e5c07b">string</span> <span style="color:#e06c75">filename</span> <span style="color:#c678dd">returns</span> <span style="color:#c678dd">nothing</span>
<span style="color:#c678dd">native</span> <span style="color:#61afef">SetCineFilterBlendMode</span> <span style="color:#c678dd">takes</span> <span style="color:#e5c07b">blendmode</span> <span style="color:#e06c75">whichMode</span> <span style="color:#c678dd">returns</span> <span style="color:#c678dd">nothing</span>
<span style="color:#c678dd">native</span> <span style="color:#61afef">SetCineFilterTexMapFlags</span> <span style="color:#c678dd">takes</span> <span style="color:#e5c07b">texmapflags</span> <span style="color:#e06c75">whichFlags</span> <span style="color:#c678dd">returns</span> <span style="color:#c678dd">nothing</span>
<span style="color:#c678dd">native</span> <span style="color:#61afef">SetCineFilterStartUV</span> <span style="color:#c678dd">takes</span> <span style="color:#e5c07b">real</span> <span style="color:#e06c75">minu</span><span style="color:#abb2bf">,</span> <span style="color:#e5c07b">real</span> <span style="color:#e06c75">minv</span><span style="color:#abb2bf">,</span> <span style="color:#e5c07b">real</span> <span style="color:#e06c75">maxu</span><span style="color:#abb2bf">,</span> <span style="color:#e5c07b">real</span> <span style="color:#e06c75">maxv</span> <span style="color:#c678dd">returns</span> <span style="color:#c678dd">nothing</span>
<span style="color:#c678dd">native</span> <span style="color:#61afef">SetCineFilterEndUV</span> <span style="color:#c678dd">takes</span> <span style="color:#e5c07b">real</span> <span style="color:#e06c75">minu</span><span style="color:#abb2bf">,</span> <span style="color:#e5c07b">real</span> <span style="color:#e06c75">minv</span><span style="color:#abb2bf">,</span> <span style="color:#e5c07b">real</span> <span style="color:#e06c75">maxu</span><span style="color:#abb2bf">,</span> <span style="color:#e5c07b">real</span> <span style="color:#e06c75">maxv</span> <span style="color:#c678dd">returns</span> <span style="color:#c678dd">nothing</span>
<span style="color:#c678dd">native</span> <span style="color:#61afef">SetCineFilterStartColor</span> <span style="color:#c678dd">takes</span> <span style="color:#e5c07b">integer</span> <span style="color:#e06c75">red</span><span style="color:#abb2bf">,</span> <span style="color:#e5c07b">integer</span> <span style="color:#e06c75">green</span><span style="color:#abb2bf">,</span> <span style="color:#e5c07b">integer</span> <span style="color:#e06c75">blue</span><span style="color:#abb2bf">,</span> <span style="color:#e5c07b">integer</span> <span style="color:#e06c75">alpha</span> <span style="color:#c678dd">returns</span> <span style="color:#c678dd">nothing</span>
<span style="color:#c678dd">native</span> <span style="color:#61afef">SetCineFilterEndColor</span> <span style="color:#c678dd">takes</span> <span style="color:#e5c07b">integer</span> <span style="color:#e06c75">red</span><span style="color:#abb2bf">,</span> <span style="color:#e5c07b">integer</span> <span style="color:#e06c75">green</span><span style="color:#abb2bf">,</span> <span style="color:#e5c07b">integer</span> <span style="color:#e06c75">blue</span><span style="color:#abb2bf">,</span> <span style="color:#e5c07b">integer</span> <span style="color:#e06c75">alpha</span> <span style="color:#c678dd">returns</span> <span style="color:#c678dd">nothing</span>
<span style="color:#c678dd">native</span> <span style="color:#61afef">SetCineFilterDuration</span> <span style="color:#c678dd">takes</span> <span style="color:#e5c07b">real</span> <span style="color:#e06c75">duration</span> <span style="color:#c678dd">returns</span> <span style="color:#c678dd">nothing</span>
<span style="color:#c678dd">native</span> <span style="color:#61afef">DisplayCineFilter</span> <span style="color:#c678dd">takes</span> <span style="color:#e5c07b">boolean</span> <span style="color:#e06c75">flag</span> <span style="color:#c678dd">returns</span> <span style="color:#c678dd">nothing</span>
<span style="color:#c678dd">native</span> <span style="color:#61afef">IsCineFilterDisplayed</span> <span style="color:#c678dd">takes</span> <span style="color:#c678dd">nothing</span> <span style="color:#c678dd">returns</span> <span style="color:#e5c07b">boolean</span>

<span style="color:#c678dd">native</span> <span style="color:#61afef">SetCinematicScene</span> <span style="color:#c678dd">takes</span> <span style="color:#e5c07b">integer</span> <span style="color:#e06c75">portraitUnitId</span><span style="color:#abb2bf">,</span> <span style="color:#e5c07b">playercolor</span> <span style="color:#e06c75">color</span><span style="color:#abb2bf">,</span> <span style="color:#e5c07b">string</span> <span style="color:#e06c75">speakerTitle</span><span style="color:#abb2bf">,</span> <span style="color:#e5c07b">string</span> <span style="color:#e06c75">text</span><span style="color:#abb2bf">,</span> <span style="color:#e5c07b">real</span> <span style="color:#e06c75">sceneDuration</span> <span style="color:#c678dd">returns</span> <span style="color:#c678dd">nothing</span>
<span style="color:#c678dd">native</span> <span style="color:#61afef">EndCinematicScene</span> <span style="color:#c678dd">takes</span> <span style="color:#c678dd">nothing</span> <span style="color:#c678dd">returns</span> <span style="color:#c678dd">nothing</span>
<span style="color:#c678dd">native</span> <span style="color:#61afef">ForceCinematicSubtitles</span> <span style="color:#c678dd">takes</span> <span style="color:#e5c07b">boolean</span> <span style="color:#e06c75">flag</span> <span style="color:#c678dd">returns</span> <span style="color:#c678dd">nothing</span>

<span style="color:#c678dd">native</span> <span style="color:#61afef">GetCameraMargin</span> <span style="color:#c678dd">takes</span> <span style="color:#e5c07b">integer</span> <span style="color:#e06c75">whichMargin</span> <span style="color:#c678dd">returns</span> <span style="color:#e5c07b">real</span>

<span style="color:#7f848e">//</span> <span style="color:#7f848e">These</span> <span style="color:#7f848e">return</span> <span style="color:#7f848e">values</span> <span style="color:#7f848e">for</span> <span style="color:#7f848e">the</span> <span style="color:#7f848e">local</span> <span style="color:#7f848e">players</span> <span style="color:#7f848e">camera</span> <span style="color:#7f848e">only...</span>
<span style="color:#c678dd">constant</span> <span style="color:#c678dd">native</span> <span style="color:#61afef">GetCameraBoundMinX</span> <span style="color:#c678dd">takes</span> <span style="color:#c678dd">nothing</span> <span style="color:#c678dd">returns</span> <span style="color:#e5c07b">real</span>
<span style="color:#c678dd">constant</span> <span style="color:#c678dd">native</span> <span style="color:#61afef">GetCameraBoundMinY</span> <span style="color:#c678dd">takes</span> <span style="color:#c678dd">nothing</span> <span style="color:#c678dd">returns</span> <span style="color:#e5c07b">real</span>
<span style="color:#c678dd">constant</span> <span style="color:#c678dd">native</span> <span style="color:#61afef">GetCameraBoundMaxX</span> <span style="color:#c678dd">takes</span> <span style="color:#c678dd">nothing</span> <span style="color:#c678dd">returns</span> <span style="color:#e5c07b">real</span>
<span style="color:#c678dd">constant</span> <span style="color:#c678dd">native</span> <span style="color:#61afef">GetCameraBoundMaxY</span> <span style="color:#c678dd">takes</span> <span style="color:#c678dd">nothing</span> <span style="color:#c678dd">returns</span> <span style="color:#e5c07b">real</span>
<span style="color:#c678dd">constant</span> <span style="color:#c678dd">native</span> <span style="color:#61afef">GetCameraField</span> <span style="color:#c678dd">takes</span> <span style="color:#e5c07b">camerafield</span> <span style="color:#e06c75">whichField</span> <span style="color:#c678dd">returns</span> <span style="color:#e5c07b">real</span>
<span style="color:#c678dd">constant</span> <span style="color:#c678dd">native</span> <span style="color:#61afef">GetCameraTargetPositionX</span> <span style="color:#c678dd">takes</span> <span style="color:#c678dd">nothing</span> <span style="color:#c678dd">returns</span> <span style="color:#e5c07b">real</span>
<span style="color:#c678dd">constant</span> <span style="color:#c678dd">native</span> <span style="color:#61afef">GetCameraTargetPositionY</span> <span style="color:#c678dd">takes</span> <span style="color:#c678dd">nothing</span> <span style="color:#c678dd">returns</span> <span style="color:#e5c07b">real</span>
<span style="color:#c678dd">constant</span> <span style="color:#c678dd">native</span> <span style="color:#61afef">GetCameraTargetPositionZ</span> <span style="color:#c678dd">takes</span> <span style="color:#c678dd">nothing</span> <span style="color:#c678dd">returns</span> <span style="color:#e5c07b">real</span>
<span style="color:#c678dd">constant</span> <span style="color:#c678dd">native</span> <span style="color:#61afef">GetCameraTargetPositionLoc</span> <span style="color:#c678dd">takes</span> <span style="color:#c678dd">nothing</span> <span style="color:#c678dd">returns</span> <span style="color:#e5c07b">location</span>
<span style="color:#c678dd">constant</span> <span style="color:#c678dd">native</span> <span style="color:#61afef">GetCameraEyePositionX</span> <span style="color:#c678dd">takes</span> <span style="color:#c678dd">nothing</span> <span style="color:#c678dd">returns</span> <span style="color:#e5c07b">real</span>
<span style="color:#c678dd">constant</span> <span style="color:#c678dd">native</span> <span style="color:#61afef">GetCameraEyePositionY</span> <span style="color:#c678dd">takes</span> <span style="color:#c678dd">nothing</span> <span style="color:#c678dd">returns</span> <span style="color:#e5c07b">real</span>
<span style="color:#c678dd">constant</span> <span style="color:#c678dd">native</span> <span style="color:#61afef">GetCameraEyePositionZ</span> <span style="color:#c678dd">takes</span> <span style="color:#c678dd">nothing</span> <span style="color:#c678dd">returns</span> <span style="color:#e5c07b">real</span>
<span style="color:#c678dd">constant</span> <span style="color:#c678dd">native</span> <span style="color:#61afef">GetCameraEyePositionLoc</span> <span style="color:#c678dd">takes</span> <span style="color:#c678dd">nothing</span> <span style="color:#c678dd">returns</span> <span style="color:#e5c07b">location</span>

<span style="color:#7f848e">//============================================================================</span>
<span style="color:#7f848e">//</span> <span style="color:#7f848e">Sound</span> <span style="color:#7f848e">API</span>
<span style="color:#7f848e">//</span>
<span style="color:#c678dd">native</span> <span style="color:#61afef">NewSoundEnvironment</span> <span style="color:#c678dd">takes</span> <span style="color:#e5c07b">string</span> <span style="color:#e06c75">environmentName</span> <span style="color:#c678dd">returns</span> <span style="color:#c678dd">nothing</span>

<span style="color:#c678dd">native</span> <span style="color:#61afef">CreateSound</span> <span style="color:#c678dd">takes</span> <span style="color:#e5c07b">string</span> <span style="color:#e06c75">fileName</span><span style="color:#abb2bf">,</span> <span style="color:#e5c07b">boolean</span> <span style="color:#e06c75">looping</span><span style="color:#abb2bf">,</span> <span style="color:#e5c07b">boolean</span> <span style="color:#e06c75">is3D</span><span style="color:#abb2bf">,</span> <span style="color:#e5c07b">boolean</span> <span style="color:#e06c75">stopwhenoutofrange</span><span style="color:#abb2bf">,</span> <span style="color:#e5c07b">integer</span> <span style="color:#e06c75">fadeInRate</span> <span style="color:#c678dd">returns</span> <span style="color:#e5c07b">sound</span>
<span style="color:#c678dd">native</span> <span style="color:#61afef">CreateSoundFilenameWithLabel</span> <span style="color:#c678dd">takes</span> <span style="color:#e5c07b">string</span> <span style="color:#e06c75">fileName</span><span style="color:#abb2bf">,</span> <span style="color:#e5c07b">boolean</span> <span style="color:#e06c75">looping</span><span style="color:#abb2bf">,</span> <span style="color:#e5c07b">boolean</span> <span style="color:#e06c75">is3D</span><span style="color:#abb2bf">,</span> <span style="color:#e5c07b">boolean</span> <span style="color:#e06c75">stopwhenoutofrange</span> <span style="color:#c678dd">returns</span> <span style="color:#e5c07b">sound</span>
<span style="color:#c678dd">native</span> <span style="color:#61afef">CreateSoundFromLabel</span> <span style="color:#c678dd">takes</span> <span style="color:#e5c07b">string</span> <span style="color:#e06c75">soundLabel</span><span style="color:#abb2bf">,</span> <span style="color:#e5c07b">boolean</span> <span style="color:#e06c75">looping</span><span style="color:#abb2bf">,</span> <span style="color:#e5c07b">boolean</span> <span style="color:#e06c75">is3D</span><span style="color:#abb2bf">,</span> <span style="color:#e5c07b">boolean</span> <span style="color:#e06c75">stopwhenoutofrange</span> <span style="color:#c678dd">returns</span> <span style="color:#e5c07b">sound</span>
<span style="color:#c678dd">native</span> <span style="color:#61afef">CreateMIDISound</span> <span style="color:#c678dd">takes</span> <span style="color:#e5c07b">string</span> <span style="color:#e06c75">soundLabel</span><span style="color:#abb2bf">,</span> <span style="color:#e5c07b">integer</span> <span style="color:#e06c75">fadeInRate</span><span style="color:#abb2bf">,</span> <span style="color:#e5c07b">integer</span> <span style="color:#e06c75">fadeOutRate</span> <span style="color:#c678dd">returns</span> <span style="color:#e5c07b">sound</span>

<span style="color:#c678dd">native</span> <span style="color:#61afef">SetSoundParamsFromLabel</span> <span style="color:#c678dd">takes</span> <span style="color:#e5c07b">sound</span> <span style="color:#e06c75">soundHandle</span><span style="color:#abb2bf">,</span> <span style="color:#e5c07b">string</span> <span style="color:#e06c75">soundLabel</span> <span style="color:#c678dd">returns</span> <span style="color:#c678dd">nothing</span>
<span style="color:#c678dd">native</span> <span style="color:#61afef">SetSoundDistanceCutoff</span> <span style="color:#c678dd">takes</span> <span style="color:#e5c07b">sound</span> <span style="color:#e06c75">soundHandle</span><span style="color:#abb2bf">,</span> <span style="color:#e5c07b">real</span> <span style="color:#e06c75">cutoff</span> <span style="color:#c678dd">returns</span> <span style="color:#c678dd">nothing</span>
<span style="color:#c678dd">native</span> <span style="color:#61afef">SetSoundChannel</span> <span style="color:#c678dd">takes</span> <span style="color:#e5c07b">sound</span> <span style="color:#e06c75">soundHandle</span><span style="color:#abb2bf">,</span> <span style="color:#e5c07b">integer</span> <span style="color:#e06c75">channel</span> <span style="color:#c678dd">returns</span> <span style="color:#c678dd">nothing</span>
<span style="color:#c678dd">native</span> <span style="color:#61afef">SetSoundVolume</span> <span style="color:#c678dd">takes</span> <span style="color:#e5c07b">sound</span> <span style="color:#e06c75">soundHandle</span><span style="color:#abb2bf">,</span> <span style="color:#e5c07b">integer</span> <span style="color:#e06c75">volume</span> <span style="color:#c678dd">returns</span> <span style="color:#c678dd">nothing</span>
<span style="color:#c678dd">native</span> <span style="color:#61afef">SetSoundPitch</span> <span style="color:#c678dd">takes</span> <span style="color:#e5c07b">sound</span> <span style="color:#e06c75">soundHandle</span><span style="color:#abb2bf">,</span> <span style="color:#e5c07b">real</span> <span style="color:#e06c75">pitch</span> <span style="color:#c678dd">returns</span> <span style="color:#c678dd">nothing</span>

<span style="color:#7f848e">//</span> <span style="color:#7f848e">the</span> <span style="color:#7f848e">following</span> <span style="color:#7f848e">method</span> <span style="color:#7f848e">must</span> <span style="color:#7f848e">be</span> <span style="color:#7f848e">called</span> <span style="color:#7f848e">immediately</span> <span style="color:#7f848e">after</span> <span style="color:#7f848e">calling</span> <span style="color:#7f848e">&quot;StartSound&quot;</span>
<span style="color:#c678dd">native</span> <span style="color:#61afef">SetSoundPlayPosition</span> <span style="color:#c678dd">takes</span> <span style="color:#e5c07b">sound</span> <span style="color:#e06c75">soundHandle</span><span style="color:#abb2bf">,</span> <span style="color:#e5c07b">integer</span> <span style="color:#e06c75">millisecs</span> <span style="color:#c678dd">returns</span> <span style="color:#c678dd">nothing</span>

<span style="color:#7f848e">//</span> <span style="color:#7f848e">these</span> <span style="color:#7f848e">calls</span> <span style="color:#7f848e">are</span> <span style="color:#7f848e">only</span> <span style="color:#7f848e">valid</span> <span style="color:#7f848e">if</span> <span style="color:#7f848e">the</span> <span style="color:#7f848e">sound</span> <span style="color:#7f848e">was</span> <span style="color:#7f848e">created</span> <span style="color:#7f848e">with</span> <span style="color:#7f848e">3d</span> <span style="color:#7f848e">enabled</span>
<span style="color:#c678dd">native</span> <span style="color:#61afef">SetSoundDistances</span> <span style="color:#c678dd">takes</span> <span style="color:#e5c07b">sound</span> <span style="color:#e06c75">soundHandle</span><span style="color:#abb2bf">,</span> <span style="color:#e5c07b">real</span> <span style="color:#e06c75">minDist</span><span style="color:#abb2bf">,</span> <span style="color:#e5c07b">real</span> <span style="color:#e06c75">maxDist</span> <span style="color:#c678dd">returns</span> <span style="color:#c678dd">nothing</span>
<span style="color:#c678dd">native</span> <span style="color:#61afef">SetSoundConeAngles</span> <span style="color:#c678dd">takes</span> <span style="color:#e5c07b">sound</span> <span style="color:#e06c75">soundHandle</span><span style="color:#abb2bf">,</span> <span style="color:#e5c07b">real</span> <span style="color:#e06c75">inside</span><span style="color:#abb2bf">,</span> <span style="color:#e5c07b">real</span> <span style="color:#e06c75">outside</span><span style="color:#abb2bf">,</span> <span style="color:#e5c07b">integer</span> <span style="color:#e06c75">outsideVolume</span> <span style="color:#c678dd">returns</span> <span style="color:#c678dd">nothing</span>
<span style="color:#c678dd">native</span> <span style="color:#61afef">SetSoundConeOrientation</span> <span style="color:#c678dd">takes</span> <span style="color:#e5c07b">sound</span> <span style="color:#e06c75">soundHandle</span><span style="color:#abb2bf">,</span> <span style="color:#e5c07b">real</span> <span style="color:#e06c75">x</span><span style="color:#abb2bf">,</span> <span style="color:#e5c07b">real</span> <span style="color:#e06c75">y</span><span style="color:#abb2bf">,</span> <span style="color:#e5c07b">real</span> <span style="color:#e06c75">z</span> <span style="color:#c678dd">returns</span> <span style="color:#c678dd">nothing</span>
<span style="color:#c678dd">native</span> <span style="color:#61afef">SetSoundPosition</span> <span style="color:#c678dd">takes</span> <span style="color:#e5c07b">sound</span> <span style="color:#e06c75">soundHandle</span><span style="color:#abb2bf">,</span> <span style="color:#e5c07b">real</span> <span style="color:#e06c75">x</span><span style="color:#abb2bf">,</span> <span style="color:#e5c07b">real</span> <span style="color:#e06c75">y</span><span style="color:#abb2bf">,</span> <span style="color:#e5c07b">real</span> <span style="color:#e06c75">z</span> <span style="color:#c678dd">returns</span> <span style="color:#c678dd">nothing</span>
<span style="color:#c678dd">native</span> <span style="color:#61afef">SetSoundVelocity</span> <span style="color:#c678dd">takes</span> <span style="color:#e5c07b">sound</span> <span style="color:#e06c75">soundHandle</span><span style="color:#abb2bf">,</span> <span style="color:#e5c07b">real</span> <span style="color:#e06c75">x</span><span style="color:#abb2bf">,</span> <span style="color:#e5c07b">real</span> <span style="color:#e06c75">y</span><span style="color:#abb2bf">,</span> <span style="color:#e5c07b">real</span> <span style="color:#e06c75">z</span> <span style="color:#c678dd">returns</span> <span style="color:#c678dd">nothing</span>
<span style="color:#c678dd">native</span> <span style="color:#61afef">AttachSoundToUnit</span> <span style="color:#c678dd">takes</span> <span style="color:#e5c07b">sound</span> <span style="color:#e06c75">soundHandle</span><span style="color:#abb2bf">,</span> <span style="color:#e5c07b">unit</span> <span style="color:#e06c75">whichUnit</span> <span style="color:#c678dd">returns</span> <span style="color:#c678dd">nothing</span>

<span style="color:#c678dd">native</span> <span style="color:#61afef">StartSound</span> <span style="color:#c678dd">takes</span> <span style="color:#e5c07b">sound</span> <span style="color:#e06c75">soundHandle</span> <span style="color:#c678dd">returns</span> <span style="color:#c678dd">nothing</span>
<span style="color:#c678dd">native</span> <span style="color:#61afef">StopSound</span> <span style="color:#c678dd">takes</span> <span style="color:#e5c07b">sound</span> <span style="color:#e06c75">soundHandle</span><span style="color:#abb2bf">,</span> <span style="color:#e5c07b">boolean</span> <span style="color:#e06c75">killWhenDone</span><span style="color:#abb2bf">,</span> <span style="color:#e5c07b">boolean</span> <span style="color:#e06c75">fadeOut</span> <span style="color:#c678dd">returns</span> <span style="color:#c678dd">nothing</span>
<span style="color:#c678dd">native</span> <span style="color:#61afef">KillSoundWhenDone</span> <span style="color:#c678dd">takes</span> <span style="color:#e5c07b">sound</span> <span style="color:#e06c75">soundHandle</span> <span style="color:#c678dd">returns</span> <span style="color:#c678dd">nothing</span>

<span style="color:#7f848e">//</span> <span style="color:#7f848e">Music</span> <span style="color:#7f848e">Interface.</span> <span style="color:#7f848e">Note</span> <span style="color:#7f848e">that</span> <span style="color:#7f848e">if</span> <span style="color:#7f848e">music</span> <span style="color:#7f848e">is</span> <span style="color:#7f848e">disabled,</span> <span style="color:#7f848e">these</span> <span style="color:#7f848e">calls</span> <span style="color:#7f848e">do</span> <span style="color:#7f848e">nothing</span>
<span style="color:#c678dd">native</span> <span style="color:#61afef">SetMapMusic</span> <span style="color:#c678dd">takes</span> <span style="color:#e5c07b">string</span> <span style="color:#e06c75">musicName</span><span style="color:#abb2bf">,</span> <span style="color:#e5c07b">boolean</span> <span style="color:#e06c75">random</span><span style="color:#abb2bf">,</span> <span style="color:#e5c07b">integer</span> <span style="color:#e06c75">index</span> <span style="color:#c678dd">returns</span> <span style="color:#c678dd">nothing</span>
<span style="color:#c678dd">native</span> <span style="color:#61afef">ClearMapMusic</span> <span style="color:#c678dd">takes</span> <span style="color:#c678dd">nothing</span> <span style="color:#c678dd">returns</span> <span style="color:#c678dd">nothing</span>

<span style="color:#c678dd">native</span> <span style="color:#61afef">PlayMusic</span> <span style="color:#c678dd">takes</span> <span style="color:#e5c07b">string</span> <span style="color:#e06c75">musicName</span> <span style="color:#c678dd">returns</span> <span style="color:#c678dd">nothing</span>
<span style="color:#c678dd">native</span> <span style="color:#61afef">PlayMusicEx</span> <span style="color:#c678dd">takes</span> <span style="color:#e5c07b">string</span> <span style="color:#e06c75">musicName</span><span style="color:#abb2bf">,</span> <span style="color:#e5c07b">integer</span> <span style="color:#e06c75">frommsecs</span><span style="color:#abb2bf">,</span> <span style="color:#e5c07b">integer</span> <span style="color:#e06c75">fadeinmsecs</span> <span style="color:#c678dd">returns</span> <span style="color:#c678dd">nothing</span>
<span style="color:#c678dd">native</span> <span style="color:#61afef">StopMusic</span> <span style="color:#c678dd">takes</span> <span style="color:#e5c07b">boolean</span> <span style="color:#e06c75">fadeOut</span> <span style="color:#c678dd">returns</span> <span style="color:#c678dd">nothing</span>
<span style="color:#c678dd">native</span> <span style="color:#61afef">ResumeMusic</span> <span style="color:#c678dd">takes</span> <span style="color:#c678dd">nothing</span> <span style="color:#c678dd">returns</span> <span style="color:#c678dd">nothing</span>

<span style="color:#c678dd">native</span> <span style="color:#61afef">PlayThematicMusic</span> <span style="color:#c678dd">takes</span> <span style="color:#e5c07b">string</span> <span style="color:#e06c75">musicFileName</span> <span style="color:#c678dd">returns</span> <span style="color:#c678dd">nothing</span>
<span style="color:#c678dd">native</span> <span style="color:#61afef">PlayThematicMusicEx</span> <span style="color:#c678dd">takes</span> <span style="color:#e5c07b">string</span> <span style="color:#e06c75">musicFileName</span><span style="color:#abb2bf">,</span> <span style="color:#e5c07b">integer</span> <span style="color:#e06c75">frommsecs</span> <span style="color:#c678dd">returns</span> <span style="color:#c678dd">nothing</span>
<span style="color:#c678dd">native</span> <span style="color:#61afef">EndThematicMusic</span> <span style="color:#c678dd">takes</span> <span style="color:#c678dd">nothing</span> <span style="color:#c678dd">returns</span> <span style="color:#c678dd">nothing</span>

<span style="color:#c678dd">native</span> <span style="color:#61afef">SetMusicVolume</span> <span style="color:#c678dd">takes</span> <span style="color:#e5c07b">integer</span> <span style="color:#e06c75">volume</span> <span style="color:#c678dd">returns</span> <span style="color:#c678dd">nothing</span>
<span style="color:#c678dd">native</span> <span style="color:#61afef">SetMusicPlayPosition</span> <span style="color:#c678dd">takes</span> <span style="color:#e5c07b">integer</span> <span style="color:#e06c75">millisecs</span> <span style="color:#c678dd">returns</span> <span style="color:#c678dd">nothing</span>
<span style="color:#c678dd">native</span> <span style="color:#61afef">SetThematicMusicPlayPosition</span> <span style="color:#c678dd">takes</span> <span style="color:#e5c07b">integer</span> <span style="color:#e06c75">millisecs</span> <span style="color:#c678dd">returns</span> <span style="color:#c678dd">nothing</span>

<span style="color:#7f848e">//</span> <span style="color:#7f848e">other</span> <span style="color:#7f848e">music</span> <span style="color:#7f848e">and</span> <span style="color:#7f848e">sound</span> <span style="color:#7f848e">calls</span>
<span style="color:#c678dd">native</span> <span style="color:#61afef">SetSoundDuration</span> <span style="color:#c678dd">takes</span> <span style="color:#e5c07b">sound</span> <span style="color:#e06c75">soundHandle</span><span style="color:#abb2bf">,</span> <span style="color:#e5c07b">integer</span> <span style="color:#e06c75">duration</span> <span style="color:#c678dd">returns</span> <span style="color:#c678dd">nothing</span>
<span style="color:#c678dd">native</span> <span style="color:#61afef">GetSoundDuration</span> <span style="color:#c678dd">takes</span> <span style="color:#e5c07b">sound</span> <span style="color:#e06c75">soundHandle</span> <span style="color:#c678dd">returns</span> <span style="color:#e5c07b">integer</span>
<span style="color:#c678dd">native</span> <span style="color:#61afef">GetSoundFileDuration</span> <span style="color:#c678dd">takes</span> <span style="color:#e5c07b">string</span> <span style="color:#e06c75">musicFileName</span> <span style="color:#c678dd">returns</span> <span style="color:#e5c07b">integer</span>

<span style="color:#c678dd">native</span> <span style="color:#61afef">VolumeGroupSetVolume</span> <span style="color:#c678dd">takes</span> <span style="color:#e5c07b">volumegroup</span> <span style="color:#e06c75">vgroup</span><span style="color:#abb2bf">,</span> <span style="color:#e5c07b">real</span> <span style="color:#e06c75">scale</span> <span style="color:#c678dd">returns</span> <span style="color:#c678dd">nothing</span>
<span style="color:#c678dd">native</span> <span style="color:#61afef">VolumeGroupReset</span> <span style="color:#c678dd">takes</span> <span style="color:#c678dd">nothing</span> <span style="color:#c678dd">returns</span> <span style="color:#c678dd">nothing</span>

<span style="color:#c678dd">native</span> <span style="color:#61afef">GetSoundIsPlaying</span> <span style="color:#c678dd">takes</span> <span style="color:#e5c07b">sound</span> <span style="color:#e06c75">soundHandle</span> <span style="color:#c678dd">returns</span> <span style="color:#e5c07b">boolean</span>
<span style="color:#c678dd">native</span> <span style="color:#61afef">GetSoundIsLoading</span> <span style="color:#c678dd">takes</span> <span style="color:#e5c07b">sound</span> <span style="color:#e06c75">soundHandle</span> <span style="color:#c678dd">returns</span> <span style="color:#e5c07b">boolean</span>

<span style="color:#c678dd">native</span> <span style="color:#61afef">RegisterStackedSound</span> <span style="color:#c678dd">takes</span> <span style="color:#e5c07b">sound</span> <span style="color:#e06c75">soundHandle</span><span style="color:#abb2bf">,</span> <span style="color:#e5c07b">boolean</span> <span style="color:#e06c75">byPosition</span><span style="color:#abb2bf">,</span> <span style="color:#e5c07b">real</span> <span style="color:#e06c75">rectwidth</span><span style="color:#abb2bf">,</span> <span style="color:#e5c07b">real</span> <span style="color:#e06c75">rectheight</span> <span style="color:#c678dd">returns</span> <span style="color:#c678dd">nothing</span>
<span style="color:#c678dd">native</span> <span style="color:#61afef">UnregisterStackedSound</span> <span style="color:#c678dd">takes</span> <span style="color:#e5c07b">sound</span> <span style="color:#e06c75">soundHandle</span><span style="color:#abb2bf">,</span> <span style="color:#e5c07b">boolean</span> <span style="color:#e06c75">byPosition</span><span style="color:#abb2bf">,</span> <span style="color:#e5c07b">real</span> <span style="color:#e06c75">rectwidth</span><span style="color:#abb2bf">,</span> <span style="color:#e5c07b">real</span> <span style="color:#e06c75">rectheight</span> <span style="color:#c678dd">returns</span> <span style="color:#c678dd">nothing</span>

<span style="color:#7f848e">//============================================================================</span>
<span style="color:#7f848e">//</span> <span style="color:#7f848e">Effects</span> <span style="color:#7f848e">API</span>
<span style="color:#7f848e">//</span>
<span style="color:#c678dd">native</span> <span style="color:#61afef">AddWeatherEffect</span> <span style="color:#c678dd">takes</span> <span style="color:#e5c07b">rect</span> <span style="color:#e06c75">where</span><span style="color:#abb2bf">,</span> <span style="color:#e5c07b">integer</span> <span style="color:#e06c75">effectID</span> <span style="color:#c678dd">returns</span> <span style="color:#e5c07b">weathereffect</span>
<span style="color:#c678dd">native</span> <span style="color:#61afef">RemoveWeatherEffect</span> <span style="color:#c678dd">takes</span> <span style="color:#e5c07b">weathereffect</span> <span style="color:#e06c75">whichEffect</span> <span style="color:#c678dd">returns</span> <span style="color:#c678dd">nothing</span>
<span style="color:#c678dd">native</span> <span style="color:#61afef">EnableWeatherEffect</span> <span style="color:#c678dd">takes</span> <span style="color:#e5c07b">weathereffect</span> <span style="color:#e06c75">whichEffect</span><span style="color:#abb2bf">,</span> <span style="color:#e5c07b">boolean</span> <span style="color:#e06c75">enable</span> <span style="color:#c678dd">returns</span> <span style="color:#c678dd">nothing</span>

<span style="color:#c678dd">native</span> <span style="color:#61afef">TerrainDeformCrater</span> <span style="color:#c678dd">takes</span> <span style="color:#e5c07b">real</span> <span style="color:#e06c75">x</span><span style="color:#abb2bf">,</span> <span style="color:#e5c07b">real</span> <span style="color:#e06c75">y</span><span style="color:#abb2bf">,</span> <span style="color:#e5c07b">real</span> <span style="color:#e06c75">radius</span><span style="color:#abb2bf">,</span> <span style="color:#e5c07b">real</span> <span style="color:#e06c75">depth</span><span style="color:#abb2bf">,</span> <span style="color:#e5c07b">integer</span> <span style="color:#e06c75">duration</span><span style="color:#abb2bf">,</span> <span style="color:#e5c07b">boolean</span> <span style="color:#e06c75">permanent</span> <span style="color:#c678dd">returns</span> <span style="color:#e5c07b">terraindeformation</span>
<span style="color:#c678dd">native</span> <span style="color:#61afef">TerrainDeformRipple</span> <span style="color:#c678dd">takes</span> <span style="color:#e5c07b">real</span> <span style="color:#e06c75">x</span><span style="color:#abb2bf">,</span> <span style="color:#e5c07b">real</span> <span style="color:#e06c75">y</span><span style="color:#abb2bf">,</span> <span style="color:#e5c07b">real</span> <span style="color:#e06c75">radius</span><span style="color:#abb2bf">,</span> <span style="color:#e5c07b">real</span> <span style="color:#e06c75">depth</span><span style="color:#abb2bf">,</span> <span style="color:#e5c07b">integer</span> <span style="color:#e06c75">duration</span><span style="color:#abb2bf">,</span> <span style="color:#e5c07b">integer</span> <span style="color:#e06c75">count</span><span style="color:#abb2bf">,</span> <span style="color:#e5c07b">real</span> <span style="color:#e06c75">spaceWaves</span> <span style="color:#c678dd">returns</span> <span style="color:#c678dd">nothing</span>
<span style="color:#c678dd">native</span> <span style="color:#61afef">TerrainDeformWave</span> <span style="color:#c678dd">takes</span> <span style="color:#e5c07b">real</span> <span style="color:#e06c75">x</span><span style="color:#abb2bf">,</span> <span style="color:#e5c07b">real</span> <span style="color:#e06c75">y</span><span style="color:#abb2bf">,</span> <span style="color:#e5c07b">real</span> <span style="color:#e06c75">dirX</span><span style="color:#abb2bf">,</span> <span style="color:#e5c07b">real</span> <span style="color:#e06c75">dirY</span><span style="color:#abb2bf">,</span> <span style="color:#e5c07b">real</span> <span style="color:#e06c75">distance</span><span style="color:#abb2bf">,</span> <span style="color:#e5c07b">real</span> <span style="color:#e06c75">speed</span><span style="color:#abb2bf">,</span> <span style="color:#e5c07b">real</span> <span style="color:#e06c75">radius</span><span style="color:#abb2bf">,</span> <span style="color:#e5c07b">real</span> <span style="color:#e06c75">depth</span> <span style="color:#c678dd">returns</span> <span style="color:#c678dd">nothing</span>
<span style="color:#c678dd">native</span> <span style="color:#61afef">TerrainDeformRandom</span> <span style="color:#c678dd">takes</span> <span style="color:#e5c07b">real</span> <span style="color:#e06c75">x</span><span style="color:#abb2bf">,</span> <span style="color:#e5c07b">real</span> <span style="color:#e06c75">y</span><span style="color:#abb2bf">,</span> <span style="color:#e5c07b">real</span> <span style="color:#e06c75">radius</span><span style="color:#abb2bf">,</span> <span style="color:#e5c07b">real</span> <span style="color:#e06c75">minDelta</span><span style="color:#abb2bf">,</span> <span style="color:#e5c07b">real</span> <span style="color:#e06c75">maxDelta</span><span style="color:#abb2bf">,</span> <span style="color:#e5c07b">integer</span> <span style="color:#e06c75">duration</span> <span style="color:#c678dd">returns</span> <span style="color:#c678dd">nothing</span>
<span style="color:#c678dd">native</span> <span style="color:#61afef">TerrainDeformStop</span> <span style="color:#c678dd">takes</span> <span style="color:#e5c07b">terraindeformation</span> <span style="color:#e06c75">deformation</span><span style="color:#abb2bf">,</span> <span style="color:#e5c07b">integer</span> <span style="color:#e06c75">duration</span> <span style="color:#c678dd">returns</span> <span style="color:#c678dd">nothing</span>
<span style="color:#c678dd">native</span> <span style="color:#61afef">TerrainDeformStopAll</span> <span style="color:#c678dd">takes</span> <span style="color:#c678dd">nothing</span> <span style="color:#c678dd">returns</span> <span style="color:#c678dd">nothing</span></div></div>
<div class="r" style="left:2558px;top:260px;width:1px;height:1232px;background:#363a42;"></div>
<div class="r" style="left:2559px;top:910px;width:27px;height:40px;background:rgba(78,86,102,0.376);"></div>
<div class="r" style="left:2559px;top:875px;width:27px;height:4px;background:#4d78cc;"></div>
<div class="r" style="left:898px;top:664px;width:1327px;height:107px;box-sizing:border-box;background:#21252b;border:2px solid #181a1f;border-radius:6px;box-shadow:0 2px 8px rgba(0,0,0,0.36)"></div>
<div class="t" style="left:916.7px;top:678.0px;font-size:26px;line-height:26px;color:#c8ccd4;letter-spacing:-0.29px;">=============================================================================</div>
<div class="t" style="left:2072.3px;top:678.8px;font-size:25px;line-height:25px;color:#c8ccd4;letter-spacing:-0.53px;">Camera API</div>
<div class="t" style="left:916.7px;top:730.7px;font-size:26px;line-height:26px;letter-spacing:-0.32px"><span style="color:#61afef;">native</span><span style="color:#c8ccd4;"> </span><span style="color:#c8ccd4;font-weight:bold;">SetCameraPosition</span><span style="color:#c8ccd4;"> </span><span style="color:#c8ccd4;font-style:italic;">takes</span><span style="color:#c8ccd4;"> </span><span style="color:#c8ccd4;font-weight:bold;">real</span><span style="color:#c8ccd4;"> x, </span><span style="color:#c8ccd4;font-weight:bold;">real</span><span style="color:#c8ccd4;"> y </span><span style="color:#c8ccd4;font-style:italic;">returns</span><span style="color:#c8ccd4;"> </span><span style="color:#c8ccd4;font-weight:bold;">nothing</span></div>
<div class="r" style="left:650px;top:1492px;width:1936px;height:2px;background:#3a3f4b;"></div>
<div class="t" style="left:690.8px;top:1517.6px;font-size:22px;line-height:22px;color:#e6e8ec;letter-spacing:-0.61px;">PROBLEMS</div>
<div class="t" style="left:858.8px;top:1517.6px;font-size:22px;line-height:22px;color:#a0a4ab;letter-spacing:-0.05px;">OUTPUT</div>
<div class="t" style="left:998.4px;top:1517.6px;font-size:22px;line-height:22px;color:#a0a4ab;letter-spacing:-0.72px;">PORTS</div>
<div class="t" style="left:1120.3px;top:1517.6px;font-size:22px;line-height:22px;color:#a0a4ab;letter-spacing:-0.24px;">DEBUG CONSOLE</div>
<div class="r" style="left:686px;top:1549px;width:128px;height:2px;background:#e6e8ec;"></div>
<div class="t" style="left:690.8px;top:1571.6px;font-size:26px;line-height:26px;color:#c8ccd4;letter-spacing:0.60px;">No problems have been detected in the workspace.</div>
<div class="r" style="left:1562px;top:1505px;width:799px;height:47px;background:#1d2025;border-radius:3px"></div>
<div class="t" style="left:1577.0px;top:1517.1px;font-size:25px;line-height:25px;color:#80848c;letter-spacing:0.35px;">Filter (e.g. text, **/*.ts, !**/node_modules/**)</div>
<svg class="s" style="left:2318px;top:1515px;" width="32" height="28" viewBox="0 0 32 28"><path d="M3,3 H29 L19,15 V26 L13,23 V15 Z" fill="none" stroke="#b8bcc4" stroke-width="2.2" stroke-linejoin="round"/></svg>
<svg class="s" style="left:2376px;top:1514px;" width="32" height="30" viewBox="0 0 32 30"><rect x="2" y="10" width="18" height="18" rx="2" fill="none" stroke="#b8bcc4" stroke-width="2.2"/><path d="M9,3 H26 Q28,3 28,5 V21 H20" fill="none" stroke="#b8bcc4" stroke-width="2.2"/><path d="M6,19 H16" stroke="#b8bcc4" stroke-width="2.2"/></svg>
<svg class="s" style="left:2424px;top:1514px;" width="28" height="30" viewBox="0 0 28 30"><path d="M2,5 H26 M2,12 H26 M2,19 H26 M2,26 H18" stroke="#b8bcc4" stroke-width="2.2"/></svg>
<svg class="s" style="left:2474px;top:1517px;" width="28" height="20" viewBox="0 0 28 20"><path d="M2,16 L13,4 L24,16" fill="none" stroke="#b8bcc4" stroke-width="2.4"/></svg>
<svg class="s" style="left:2528px;top:1516px;" width="24" height="24" viewBox="0 0 24 24"><path d="M3,3 L21,21 M21,3 L3,21" stroke="#b8bcc4" stroke-width="2.4"/></svg>
<div class="r" style="left:112px;top:1954px;width:2474px;height:44px;background:#1e2227;"></div>
<div class="r" style="left:112px;top:1954px;width:68px;height:44px;background:#5a7bcb;"></div>
<svg class="s" style="left:134px;top:1960px;" width="26" height="32" viewBox="0 0 26 32"><path d="M4,11 L11.6,18.8 L4,26.5 M20,4 L12.5,11.5 L20,19" fill="none" stroke="#fff" stroke-width="2"/></svg>
<svg class="s" style="left:192px;top:1960px;" width="26" height="32" viewBox="0 0 26 32"><circle cx="7.9" cy="6" r="3.8" fill="none" stroke="#a9adb6" stroke-width="2"/><circle cx="7.9" cy="26" r="3.8" fill="none" stroke="#a9adb6" stroke-width="2"/><circle cx="20" cy="11.5" r="3.8" fill="none" stroke="#a9adb6" stroke-width="2"/><path d="M7.9,9.8 V22.2 M7.9,20 C8,16.5 10,16 14,16 C18,16 19.5,15 19.8,15.3" fill="none" stroke="#a9adb6" stroke-width="2"/></svg>
<div class="t" style="left:227.4px;top:1964.9px;font-size:24px;line-height:24px;color:#a9adb6;letter-spacing:-0.14px;">main</div>
<svg class="s" style="left:291px;top:1962px;" width="32" height="28" viewBox="0 0 32 28"><path d="M5,13 A10,10 0 0 1 24,9 M27,15 A10,10 0 0 1 8,19" fill="none" stroke="#a9adb6" stroke-width="2.2"/><path d="M24,3 V10 H17 M8,25 V18 H15" fill="none" stroke="#a9adb6" stroke-width="2.2"/></svg>
<div class="t" style="left:328.0px;top:1964.9px;font-size:24px;line-height:24px;color:#a9adb6;">0</div>
<div class="t" style="left:370.9px;top:1964.9px;font-size:24px;line-height:24px;color:#a9adb6;">1</div>
<svg class="s" style="left:343px;top:1964px;" width="18" height="24" viewBox="0 0 18 24"><path d="M9,2 V21 M2.5,14.5 L9,21 L15.5,14.5" fill="none" stroke="#a9adb6" stroke-width="2.2"/></svg>
<svg class="s" style="left:383px;top:1964px;" width="18" height="24" viewBox="0 0 18 24"><path d="M9,22 V3 M2.5,9.5 L9,3 L15.5,9.5" fill="none" stroke="#a9adb6" stroke-width="2.2"/></svg>
<svg class="s" style="left:430px;top:1962px;" width="28" height="28" viewBox="0 0 28 28"><circle cx="14" cy="14" r="11.5" fill="none" stroke="#a9adb6" stroke-width="2.2"/><path d="M9.5,9.5 L18.5,18.5 M18.5,9.5 L9.5,18.5" stroke="#a9adb6" stroke-width="2.2"/></svg>
<div class="t" style="left:465.0px;top:1964.9px;font-size:24px;line-height:24px;color:#a9adb6;">0</div>
<svg class="s" style="left:487px;top:1962px;" width="28" height="28" viewBox="0 0 28 28"><path d="M14,3 L26,25 H2 Z" fill="none" stroke="#a9adb6" stroke-width="2.2" stroke-linejoin="round"/><path d="M14,10 V18 M14,20.5 V23" stroke="#a9adb6" stroke-width="2.4"/></svg>
<div class="t" style="left:522.0px;top:1964.9px;font-size:24px;line-height:24px;color:#a9adb6;">0</div>
<svg class="s" style="left:1378px;top:1960px;" width="20" height="34" viewBox="0 0 20 34"><circle cx="10" cy="17" r="6" fill="none" stroke="#a9adb6" stroke-width="2.2"/><path d="M10,2 V11 M10,23 V32" stroke="#a9adb6" stroke-width="2.2"/></svg>
<div class="t" style="left:1409.5px;top:1964.9px;font-size:24px;line-height:24px;color:#a9adb6;letter-spacing:0.56px;">nazarpunk (1 week ago)</div>
<div class="t" style="left:1714.0px;top:1964.9px;font-size:24px;line-height:24px;color:#a9adb6;letter-spacing:0.76px;">Ln 3810, Col 8</div>
<div class="t" style="left:1913.8px;top:1964.9px;font-size:24px;line-height:24px;color:#a9adb6;letter-spacing:0.37px;">Spaces: 4</div>
<div class="t" style="left:2057.3px;top:1964.9px;font-size:24px;line-height:24px;color:#a9adb6;letter-spacing:0.93px;">UTF-8</div>
<div class="t" style="left:2162.0px;top:1964.9px;font-size:24px;line-height:24px;color:#a9adb6;letter-spacing:-2.50px;">LF</div>
<div class="t" style="left:2258.7px;top:1964.9px;font-size:24px;line-height:24px;color:#a9adb6;letter-spacing:-0.92px;">JASS</div>
<div class="t" style="left:2380.5px;top:1964.9px;font-size:24px;line-height:24px;color:#a9adb6;letter-spacing:0.57px;">Chronicler</div>
<div class="t" style="left:2220.7px;top:1964.4px;font-size:22px;line-height:22px;color:#a9adb6;letter-spacing:0.10px;">{ }</div>
<svg class="s" style="left:2350px;top:1963px;" width="22" height="26" viewBox="0 0 22 26"><path d="M3,3 L19,13 L3,23 Z" fill="none" stroke="#a9adb6" stroke-width="2.2" stroke-linejoin="round"/></svg>
<svg class="s" style="left:2528px;top:1962px;" width="28" height="30" viewBox="0 0 28 30"><path d="M14,3 C8.5,3 6,7 6,12 V19 L3,23 H25 L22,19 V12 C22,7 19.5,3 14,3 Z M10.5,25.5 C11,28 17,28 17.5,25.5" fill="none" stroke="#a9adb6" stroke-width="2.2" stroke-linejoin="round"/></svg>
</div>
<div id="wb"></div>
</body></html>
